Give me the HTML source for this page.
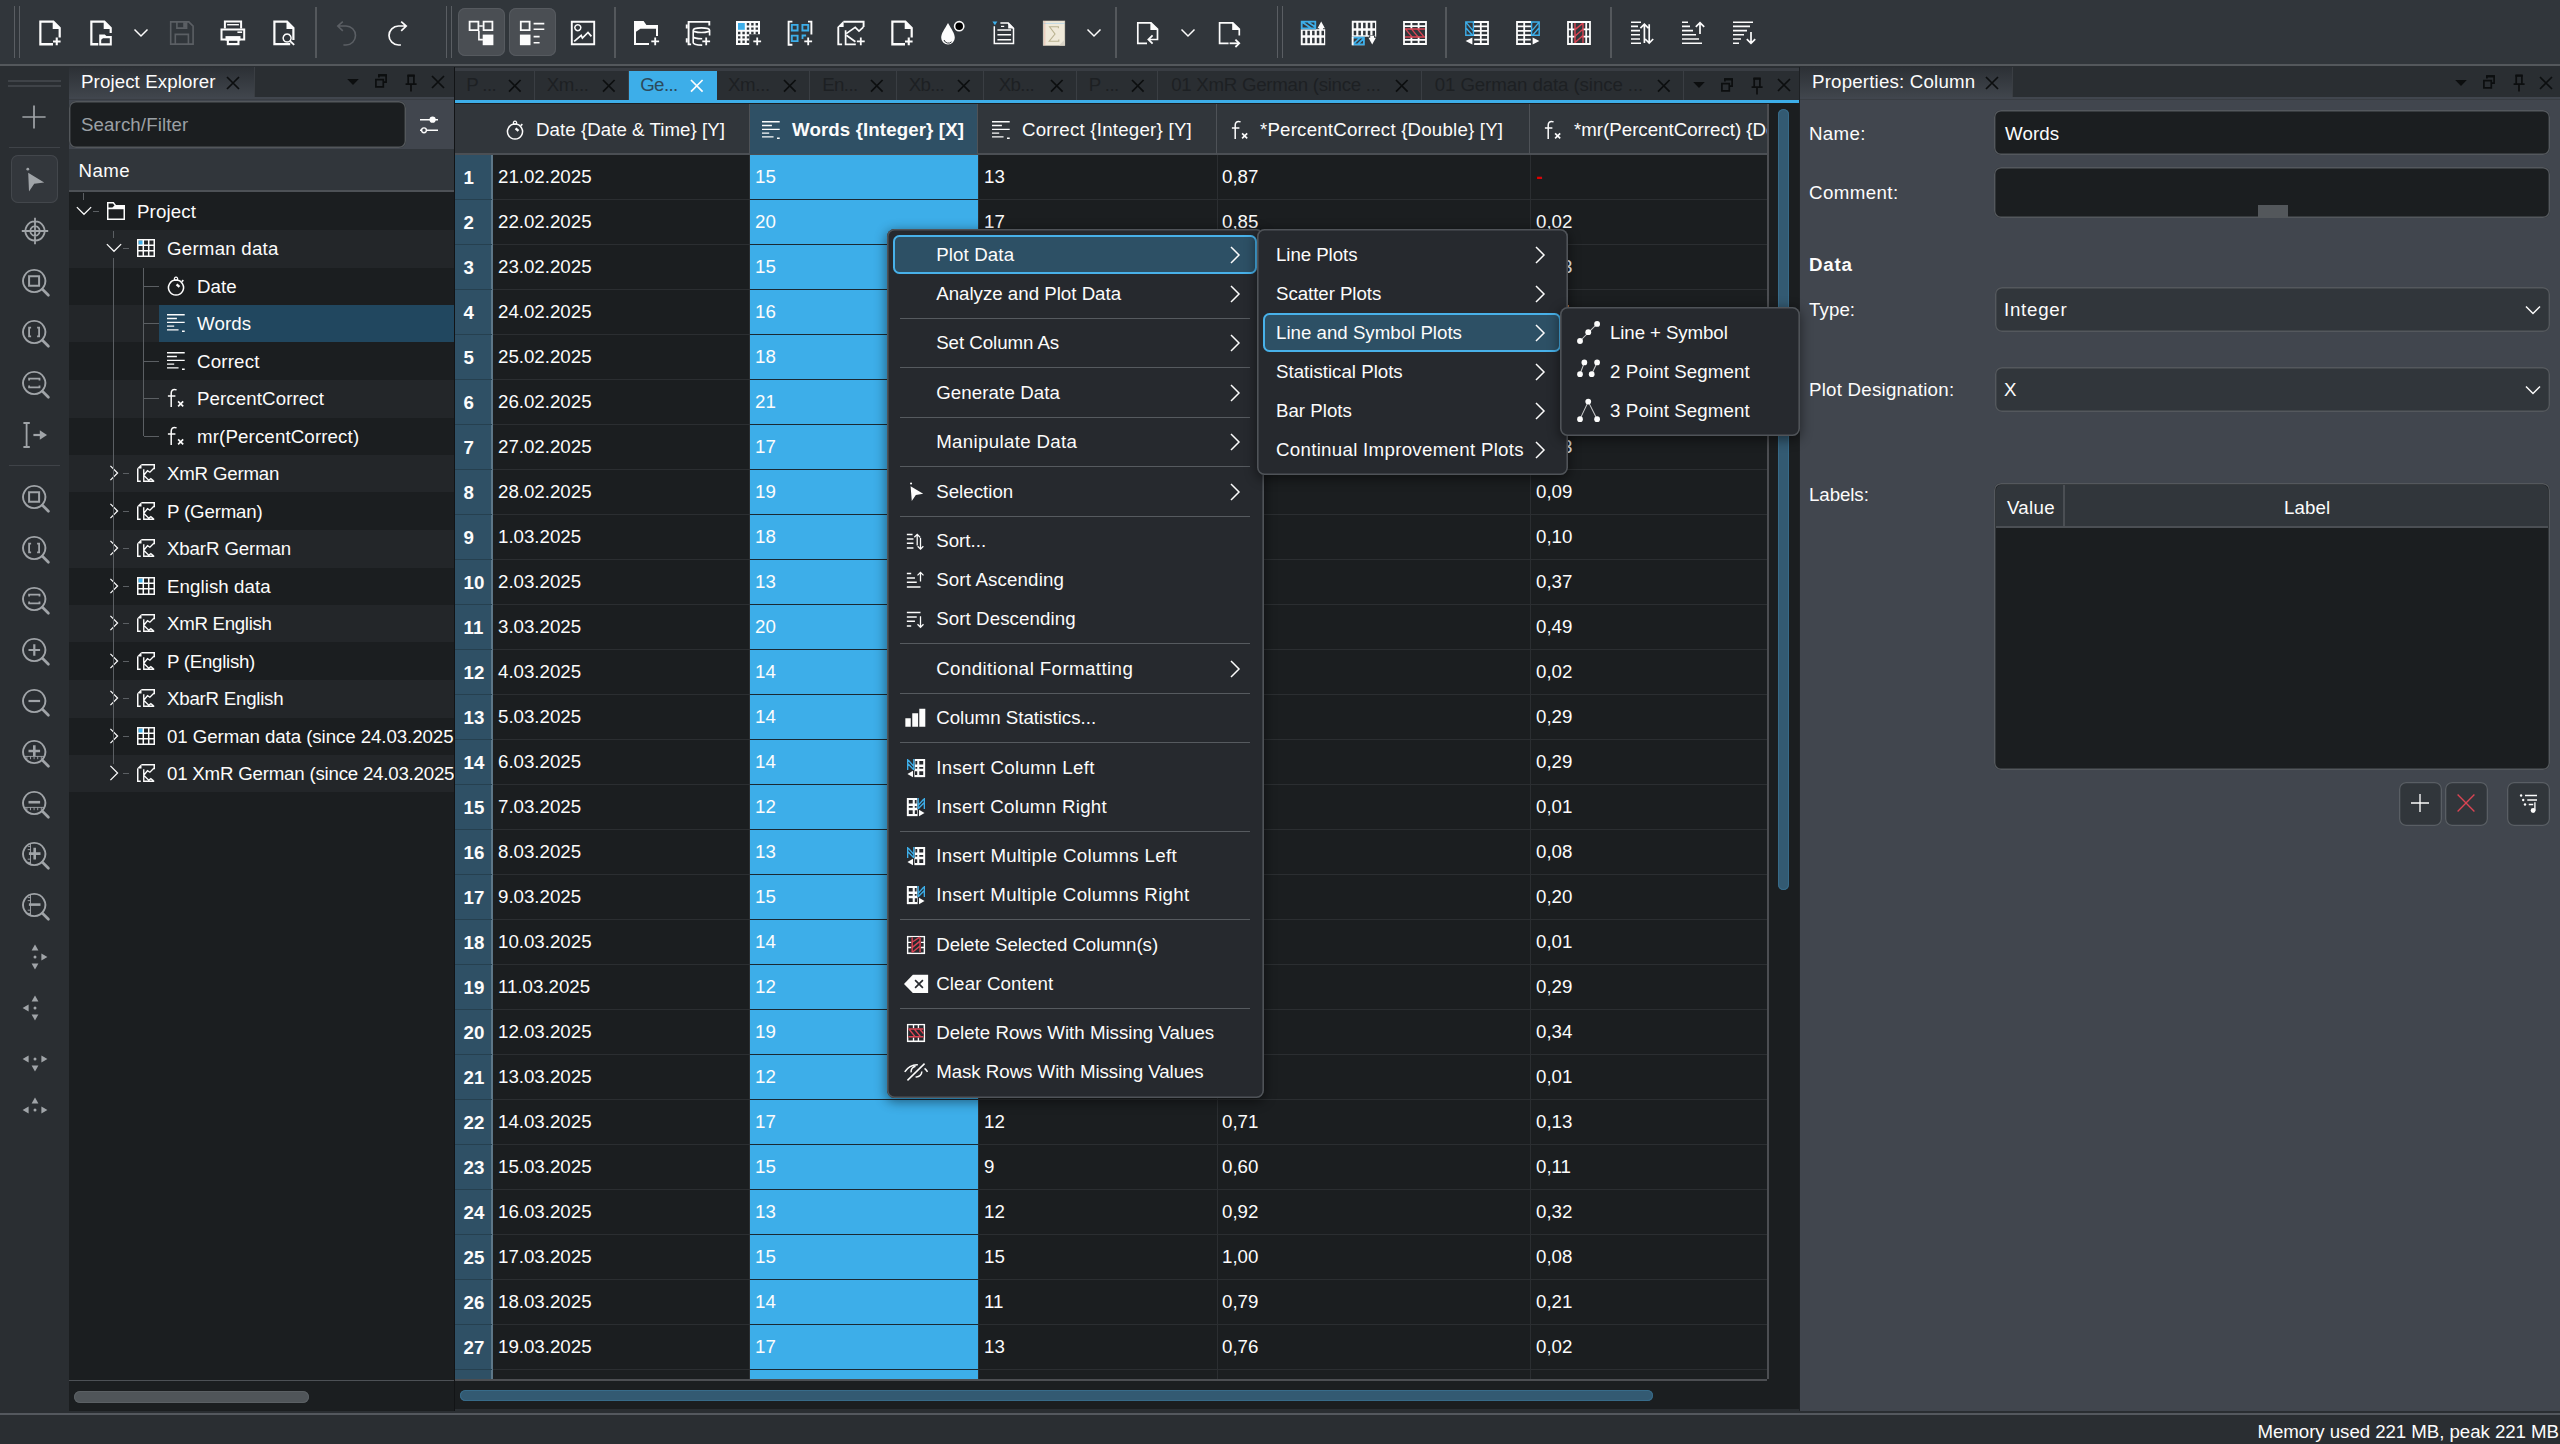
<!DOCTYPE html>
<html><head><meta charset="utf-8"><title>LabPlot</title><style>
html,body{margin:0;padding:0;background:#2a2e32;overflow:hidden}
#r{position:relative;width:2560px;height:1444px;overflow:hidden;font-family:"Liberation Sans",sans-serif;font-size:18.7px;line-height:24px;color:#fcfcfc}
.b,.i,.t{position:absolute}
.i{overflow:visible}
.t{white-space:nowrap}
</style></head><body><div id="r">
<div class="b" style="left:0px;top:0px;width:2560px;height:64px;background:#31363b;"></div>
<div class="b" style="left:0px;top:64px;width:2560px;height:2px;background:#54585c;"></div>
<div class="b" style="left:14px;top:6px;width:1px;height:52px;background:#5a5e63;"></div>
<div class="b" style="left:19px;top:6px;width:1px;height:52px;background:#5a5e63;"></div>
<svg class="i" style="left:32.5px;top:16.5px;color:#fcfcfc" width="32" height="32" viewBox="0 0 16 16"><path d="M3.125 1.75H10.4L13.9 5.25V10.2H12.8V5.95H9.85V2.85H4.225V13H10V14.25H3.125z" fill="currentColor" /><path d="M10 11.75h3.8v.95H10zM11.35 10.2h1.05v3.95h-1.05z" fill="currentColor" /></svg>
<svg class="i" style="left:83.5px;top:16.5px;color:#fcfcfc" width="32" height="32" viewBox="0 0 16 16"><path d="M3.125 1.75H10.4L13.9 5.25V8H12.8V5.95H9.85V2.85H4.225V13H7.15V14.25H3.125z" fill="currentColor" /><path d="M7.6 8.75H10.4L11.2 9.55H13.9V14.25H7.6zM8.6 11.4L9.5 10.6H12.9V13.1H8.6z" fill="currentColor" fill-rule="evenodd"/></svg>
<svg class="i" style="left:165.5px;top:16.5px;color:#5b5f64" width="32" height="32" viewBox="0 0 16 16"><path d="M2.35 2.45H11.4L13.55 4.6V13.55H2.35z" fill="none" stroke="currentColor" stroke-width="0.8" /><path d="M5.45 2.45V5.55H10.3V2.45M4.65 13.55V8.7H11.2V13.55" fill="none" stroke="currentColor" stroke-width="0.8" /><path d="M8.6 2.6h1.6v2.8H8.6z" fill="currentColor" /></svg>
<svg class="i" style="left:216.5px;top:16.5px;color:#fcfcfc" width="32" height="32" viewBox="0 0 16 16"><path d="M3.95 5.8V2.25H12.05V5.8" fill="none" stroke="currentColor" stroke-width="1" /><path d="M5.05 3.85H10.95" fill="none" stroke="currentColor" stroke-width="0.7" /><path d="M2.25 6.3H13.6V11.25H2.25z" fill="none" stroke="currentColor" stroke-width="1" /><path d="M4.25 9.55H11.75V11.75H4.25z" fill="currentColor" /><path d="M10.2 7.2h2.35v.8H10.2z" fill="currentColor" /><path d="M4.9 11.5H11.25V14.1H4.9z" fill="currentColor" /><path d="M5.95 11.9H10.2V13H5.95z" fill="#31363b" /></svg>
<svg class="i" style="left:267.5px;top:16.5px;color:#fcfcfc" width="32" height="32" viewBox="0 0 16 16"><path d="M2.65 1.75H9.75L13.25 5.25V11.45H12.15V5.95H9.25V2.85H3.75V13H11.1V14.1H2.65z" fill="currentColor" /><circle cx="9.55" cy="10.5" r="2.3" fill="#31363b"/><path d="M9.55 8.5a2 2 0 1 0 .01 0z" fill="none" stroke="currentColor" stroke-width="0.75" /><path d="M11 12l2.1 1.9" fill="none" stroke="currentColor" stroke-width="0.9" /></svg>
<svg class="i" style="left:330px;top:16.5px;color:#5b5f64" width="32" height="32" viewBox="0 0 16 16"><path d="M6.4 2.3L3.9 4.5l2.5 2.4M4 4.5h4a4.75 4.75 0 0 1 0 9.5H6.7" fill="none" stroke="currentColor" stroke-width="0.8" /></svg>
<svg class="i" style="left:381px;top:16.5px;color:#fcfcfc" width="32" height="32" viewBox="0 0 16 16"><path d="M10.1 2.3l2.5 2.2-2.5 2.4M12.5 4.5H8.75a4.75 4.75 0 0 0 0 9.5h1.2" fill="none" stroke="currentColor" stroke-width="0.85" /></svg>
<svg class="i" style="left:132px;top:24px" width="18" height="18" viewBox="0 0 18 18"><path d="M2.5 5.5L9 12l6.5-6.5" fill="none" stroke="#fcfcfc" stroke-width="1.5"/></svg>
<div class="b" style="left:314.5px;top:7px;width:2px;height:51px;background:#54585c;"></div>
<div class="b" style="left:446px;top:6px;width:1px;height:52px;background:#5a5e63;"></div>
<div class="b" style="left:451px;top:6px;width:1px;height:52px;background:#5a5e63;"></div>
<div class="b" style="left:457.5px;top:8px;width:47.5px;height:47.5px;background:#4a4e53;border-radius:7px;box-shadow:inset 0 0 0 1px #565a5f"></div>
<div class="b" style="left:508.5px;top:8px;width:47.5px;height:47.5px;background:#4a4e53;border-radius:7px;box-shadow:inset 0 0 0 1px #565a5f"></div>
<svg class="i" style="left:465.4px;top:16.5px;color:#fcfcfc" width="32" height="32" viewBox="0 0 16 16"><path d="M2.3 2.3h4.4v4.3H2.3zM9.3 2.3h4.4v4.3H9.3z" fill="none" stroke="currentColor" stroke-width="0.9" /><path d="M7.1 4.5h1.8M6.95 7v4.3h2" fill="none" stroke="currentColor" stroke-width="0.8" /><path d="M8.85 8.8h5.35v5.3H8.85z" fill="currentColor" /></svg>
<svg class="i" style="left:516.4px;top:16.5px;color:#fcfcfc" width="32" height="32" viewBox="0 0 16 16"><path d="M2.4 2.3h4.4v4.3H2.4z" fill="none" stroke="currentColor" stroke-width="0.9" /><path d="M1.95 8.8h5.3v5.3H1.95z" fill="currentColor" /><path d="M8.8 3.3h5.35M8.8 6.1h5.35M8.8 9.8h3M8.8 12.85h3" fill="none" stroke="currentColor" stroke-width="0.8" /></svg>
<svg class="i" style="left:567.4px;top:16.5px;color:#fcfcfc" width="32" height="32" viewBox="0 0 16 16"><path d="M2.4 2.35h11.2v11.3H2.4z" fill="none" stroke="currentColor" stroke-width="0.95" /><path d="M5.4 3.85a1.5 1.5 0 1 0 .01 0z" fill="none" stroke="currentColor" stroke-width="0.75" /><path d="M3.6 12.2L7.1 9.2 7.7 10.5 10.5 7.7 12.2 9.7" fill="none" stroke="currentColor" stroke-width="0.85" /></svg>
<div class="b" style="left:614px;top:7px;width:2px;height:51px;background:#54585c;"></div>
<svg class="i" style="left:629.5px;top:16.5px;color:#fcfcfc" width="32" height="32" viewBox="0 0 16 16"><path d="M2 2v12h7.5v-1H3V7.4l2.2-1.5H13v3.6h1V4H8.2L6.8 2z" fill="currentColor" /><path d="M10.65 11.7h3.9v.9h-3.9zM12.15 10.2h.9v3.9h-.9z" fill="currentColor" /></svg>
<svg class="i" style="left:680.5px;top:16.5px;color:#fcfcfc" width="32" height="32" viewBox="0 0 16 16"><g transform="translate(.75 0)"><path d="M13.4 4.25V2.45H3.05V13.7H4.3" fill="none" stroke="currentColor" stroke-width="0.95" /><path d="M1.65 3.8h.95v2h-.95zM1.65 10.65h.95v2.05h-.95z" fill="currentColor" /><path d="M5.35 6.6a4.1 1.15 0 0 0 8.2 0a4.1 1.15 0 0 0-8.2 0V12.9c0 .6 1.8 1.15 4.5 1.15M5.35 9.7c0 .6 1.8 1.15 4.5 1.15M13.55 6.6V9.3" fill="none" stroke="currentColor" stroke-width="0.8" /></g><path d="M10.65 11.7h3.9v.9h-3.9zM12.15 10.2h.9v3.9h-.9z" fill="currentColor" /></svg>
<svg class="i" style="left:731.5px;top:16.5px;color:#fcfcfc" width="32" height="32" viewBox="0 0 16 16"><path d="M2 2h12v6.6H8.6v5.4H2z" fill="currentColor" /><path d="M7.40 3.00h1.2v1.2h-1.2zM9.60 3.00h1.2v1.2h-1.2zM11.80 3.00h1.2v1.2h-1.2zM7.40 5.20h1.2v1.2h-1.2zM9.60 5.20h1.2v1.2h-1.2zM11.80 5.20h1.2v1.2h-1.2zM3.00 7.40h1.2v1.2h-1.2zM5.20 7.40h1.2v1.2h-1.2zM7.40 7.40h1.2v1.2h-1.2zM9.60 7.40h1.2v1.2h-1.2zM11.80 7.40h1.2v1.2h-1.2zM3.00 9.60h1.2v1.2h-1.2zM5.20 9.60h1.2v1.2h-1.2zM7.40 9.60h1.2v1.2h-1.2zM3.00 11.80h1.2v1.2h-1.2zM5.20 11.80h1.2v1.2h-1.2zM7.40 11.80h1.2v1.2h-1.2z" fill="#31363b" /><path d="M3 3h3.4v3.4H3z" fill="#3daee9" /><path d="M10.65 11.7h3.9v.9h-3.9zM12.15 10.2h.9v3.9h-.9z" fill="currentColor" /></svg>
<svg class="i" style="left:782.5px;top:16.5px;color:#fcfcfc" width="32" height="32" viewBox="0 0 16 16"><path d="M4.7 2.3H2.8V13.85H4.7M12.5 2.3H14.2V8.8" fill="none" stroke="currentColor" stroke-width="0.95" /><path d="M4.4 3.95h2.9v2.8H4.4zM9.7 3.95h2.9v2.8H9.7zM4.4 9.3h2.9v2.75H4.4z" fill="none" stroke="#3daee9" stroke-width="0.95" /><path d="M9.75 11V9.25h1.8" fill="none" stroke="#3daee9" stroke-width="0.9" /><path d="M10.65 11.7h3.9v.9h-3.9zM12.15 10.2h.9v3.9h-.9z" fill="currentColor" /></svg>
<svg class="i" style="left:833.5px;top:16.5px;color:#fcfcfc" width="32" height="32" viewBox="0 0 16 16"><path d="M1.7 5.05L4.8 1.9V5.05z" fill="currentColor" /><path d="M4.8 2.4H14.8V5.05M2.15 5.05V13.7H4.05" fill="none" stroke="currentColor" stroke-width="0.95" /><path d="M5.8 6.6V13.7H10.9" fill="none" stroke="currentColor" stroke-width="0.85" /><path d="M6.1 8.3L10.6 5.2 12.5 7.05 14.7 5.05M6.2 9.1L10.7 12.4" fill="none" stroke="currentColor" stroke-width="0.85" /><g transform="translate(.8 0)"><path d="M10.65 11.7h3.9v.9h-3.9zM12.15 10.2h.9v3.9h-.9z" fill="currentColor" /></g></svg>
<svg class="i" style="left:884.5px;top:16.5px;color:#fcfcfc" width="32" height="32" viewBox="0 0 16 16"><path d="M3.125 1.75H10.4L13.9 5.25V10.2H12.8V5.95H9.85V2.85H4.225V13H10V14.25H3.125z" fill="currentColor" /><path d="M10 11.75h3.8v.95H10zM11.35 10.2h1.05v3.95h-1.05z" fill="currentColor" /></svg>
<svg class="i" style="left:935.5px;top:16.5px;color:#fcfcfc" width="32" height="32" viewBox="0 0 16 16"><path d="M6 3C4.2 6.2 2.6 8.2 2.6 10.4a3.4 3.4 0 0 0 6.8 0C9.4 8.2 7.8 6.2 6 3z" fill="currentColor" /><path d="M4 11.5a2.3 2.3 0 0 0 3.8.9" fill="none" stroke="#31363b" stroke-width="0.5" /><circle cx="11.6" cy="4.6" r="2.3" fill="#000" stroke="currentColor" stroke-width="0.8"/></svg>
<svg class="i" style="left:986.5px;top:16.5px;color:#fcfcfc" width="32" height="32" viewBox="0 0 16 16"><path d="M2.7 2.25h2.5L3.95 4.1z" fill="#3daee9" /><path d="M6.7 3.05H10.6L13.25 5.7V13.25H3.65V4.6" fill="none" stroke="currentColor" stroke-width="0.75" /><path d="M10.6 2.7L13.6 5.7H10.6z" fill="currentColor" /><path d="M5.2 6.5h6.85M5.2 8.9h6.85M5.2 11.4h6.85" fill="none" stroke="currentColor" stroke-width="0.8" /><path d="M7 4.7h1.6" fill="none" stroke="currentColor" stroke-width="0.6" /></svg>
<svg class="i" style="left:1037.5px;top:16.5px;color:#fcfcfc" width="32" height="32" viewBox="0 0 16 16"><rect x="2.6" y="2" width="10.8" height="12.2" fill="#efe9d9" stroke="#d9d2c0" stroke-width="0.3"/><path d="M2.6 3.2h10.8" stroke="#8ec7ee" stroke-width="0.25"/><path d="M3.4 2v12.2" stroke="#e8a9a0" stroke-width="0.3"/><path d="M10.5 14.2l2.9-2.9v2.9z" fill="#d8d3c6"/><path d="M10.2 5.6V4.9H5.8l2.7 3.6-2.9 3.6h4.8v-.9" fill="none" stroke="#b9b290" stroke-width="0.55"/></svg>
<svg class="i" style="left:1085px;top:24px" width="18" height="18" viewBox="0 0 18 18"><path d="M2.5 5.5L9 12l6.5-6.5" fill="none" stroke="#fcfcfc" stroke-width="1.5"/></svg>
<div class="b" style="left:1115px;top:7px;width:2px;height:51px;background:#54585c;"></div>
<svg class="i" style="left:1131px;top:16.5px;color:#fcfcfc" width="32" height="32" viewBox="0 0 16 16"><path d="M8 13.15H3.4V2.9H10L13.25 6.1V11.25H9" fill="none" stroke="currentColor" stroke-width="0.85" /><path d="M9.7 2.5L13.7 6.5H9.7z" fill="currentColor" /><path d="M10.8 9.2L8.7 11.25l2.1 2.05" fill="none" stroke="currentColor" stroke-width="0.9" /></svg>
<svg class="i" style="left:1178.5px;top:24px" width="18" height="18" viewBox="0 0 18 18"><path d="M2.5 5.5L9 12l6.5-6.5" fill="none" stroke="#fcfcfc" stroke-width="1.5"/></svg>
<svg class="i" style="left:1212.5px;top:16.5px;color:#fcfcfc" width="32" height="32" viewBox="0 0 16 16"><path d="M7.8 13.15H3.3V2.9H9.9L13.15 6.1V9.3" fill="none" stroke="currentColor" stroke-width="0.85" /><path d="M9.6 2.5L13.6 6.5H9.6z" fill="currentColor" /><path d="M8.3 13.15H13" fill="none" stroke="currentColor" stroke-width="0.9" /><path d="M11.2 11.3l1.9 1.85-1.9 1.85" fill="none" stroke="currentColor" stroke-width="0.9" /></svg>
<div class="b" style="left:1277px;top:6px;width:1px;height:52px;background:#5a5e63;"></div>
<div class="b" style="left:1282px;top:6px;width:1px;height:52px;background:#5a5e63;"></div>
<svg class="i" style="left:1296.5px;top:16.5px;color:#fcfcfc" width="32" height="32" viewBox="0 0 16 16"><path d="M1.9 6.1H14.1V14.1H1.9z" fill="currentColor" /><path d="M11.1 5.4h1.9v1h-1.9z" fill="currentColor" /><path d="M2.85 6.9h1.25v2.2h-1.25zM5.20 6.9h1.25v2.2h-1.25zM7.55 6.9h1.25v2.2h-1.25zM9.90 6.9h1.25v2.2h-1.25zM12.25 6.9h1.25v2.2h-1.25zM2.85 10.35h1.25v2.8h-1.25zM5.20 10.35h1.25v2.8h-1.25zM7.55 10.35h1.25v2.8h-1.25zM9.90 10.35h1.25v2.8h-1.25zM12.25 10.35h1.25v2.8h-1.25z" fill="#31363b" /><path d="M1.9 1.9h7.65v4.2H1.9z" fill="#31363b" /><path d="M2.35 2.35h6.8v3.35h-6.8zM2.9 2.8l4.4 2.9M5.6 2.6l3.4 2.3" fill="none" stroke="#3daee9" stroke-width="0.9" /><path d="M12.1 2.2l1.85 3.45h-3.7z" fill="currentColor" /></svg>
<svg class="i" style="left:1347.5px;top:16.5px;color:#fcfcfc" width="32" height="32" viewBox="0 0 16 16"><path d="M1.9 1.9H14.1V9.9H8.3V14.1H1.9z" fill="currentColor" /><path d="M2.85 2.85h1.25v2.8h-1.25zM5.20 2.85h1.25v2.8h-1.25zM7.55 2.85h1.25v2.8h-1.25zM9.90 2.85h1.25v2.8h-1.25zM12.25 2.85h1.25v2.8h-1.25zM2.85 6.9h1.25v2.2h-1.25zM5.20 6.9h1.25v2.2h-1.25zM7.55 6.9h1.25v2.2h-1.25zM9.90 6.9h1.25v2.2h-1.25zM12.25 6.9h1.25v2.2h-1.25zM10.60 9.2h3v1h-3z" fill="#31363b" /><path d="M11.1 9.5h1.9v1.2h-1.9z" fill="currentColor" /><path d="M1.9 9.9h6.5v4.2H1.9z" fill="#31363b" /><path d="M2.35 10.3h5.6v3.35h-5.6M2.6 13.5l3.4-3.1M5 13.6l3-3" fill="none" stroke="#3daee9" stroke-width="0.9" /><path d="M2.35 9.9v4.2" fill="none" stroke="currentColor" stroke-width="0.9" /><path d="M12.1 13.8l1.85-3.45h-3.7z" fill="currentColor" /></svg>
<svg class="i" style="left:1398.5px;top:16.5px;color:#fcfcfc" width="32" height="32" viewBox="0 0 16 16"><path d="M2.5 2.5h11v11h-11zM2.5 4.6h11M2.5 11.4h11M6.2 2.5v11M9.8 2.5v11" fill="none" stroke="currentColor" stroke-width="0.9" /><path d="M3 6.2h10v3.6H3z" fill="#31363b" /><path d="M3 6h10M3 10h10M3.4 6.2l3 3.6M6.4 6.2l3 3.6M9.4 6.2l3 3.6" fill="none" stroke="#da4453" stroke-width="0.7" /></svg>
<div class="b" style="left:1445px;top:7px;width:2px;height:51px;background:#54585c;"></div>
<svg class="i" style="left:1461px;top:16.5px;color:#fcfcfc" width="32" height="32" viewBox="0 0 16 16"><path d="M6.4 2.5h7.1v11H6.4M6.4 4.7h7.1M6.4 6.9h7.1M6.4 9.1h7.1M6.4 11.3h7.1M9.9 2.5v11" fill="none" stroke="currentColor" stroke-width="0.9" /><path d="M2 9.6h4.6v4.2H2z" fill="#31363b" /><path d="M2.4 2.5h3.8v6.6H2.4zM2.6 2.8l3.4 4M2.6 5.6l3 3.4" fill="none" stroke="#3daee9" stroke-width="0.7" /><path d="M2.3 12l3.4-1.7v3.4z" fill="currentColor" /></svg>
<svg class="i" style="left:1512px;top:16.5px;color:#fcfcfc" width="32" height="32" viewBox="0 0 16 16"><path d="M9.6 2.5H2.5v11h7.1M2.5 4.7h7.1M2.5 6.9h7.1M2.5 9.1h7.1M2.5 11.3h7.1M6.1 2.5v11" fill="none" stroke="currentColor" stroke-width="0.9" /><path d="M9.4 9.6h4.6v4.2H9.4z" fill="#31363b" /><path d="M9.8 2.5h3.8v6.6H9.8zM13.4 2.8l-3.4 4M13.4 5.6l-3 3.4" fill="none" stroke="#3daee9" stroke-width="0.7" /><path d="M13.7 12l-3.4-1.7v3.4z" fill="currentColor" /></svg>
<svg class="i" style="left:1563px;top:16.5px;color:#fcfcfc" width="32" height="32" viewBox="0 0 16 16"><path d="M2.5 2.5h11v11h-11zM4.4 2.5v11M11.6 2.5v11M2.5 6.2h11M2.5 9.8h11" fill="none" stroke="currentColor" stroke-width="0.9" /><path d="M6.2 3h3.6v10H6.2z" fill="#31363b" /><path d="M6 3v10M10 3v10M6.2 6.2l3.6-3M6.2 9.4l3.6-3.2M6.2 12.6l3.6-3.2" fill="none" stroke="#da4453" stroke-width="0.7" /></svg>
<div class="b" style="left:1610px;top:7px;width:2px;height:51px;background:#54585c;"></div>
<svg class="i" style="left:1626px;top:16.5px;color:#fcfcfc" width="32" height="32" viewBox="0 0 16 16"><path d="M2.5 2.6h5M2.5 4.7h3.5M2.5 6.8h4.5M2.5 8.9h4.5M2.5 11h4.5M2.5 13.1h5" fill="none" stroke="currentColor" stroke-width="0.8" /><path d="M9.2 13V3.6M7.2 5.6l2-2 2 2M11.6 3.6V13M9.6 11l2 2 2-2" fill="none" stroke="currentColor" stroke-width="0.85" /></svg>
<svg class="i" style="left:1677px;top:16.5px;color:#fcfcfc" width="32" height="32" viewBox="0 0 16 16"><path d="M2.5 2.6h3M2.5 4.7h4M2.5 6.8h5.5M2.5 8.9h7M2.5 11h8.5M2.5 13.1h10" fill="none" stroke="currentColor" stroke-width="0.8" /><path d="M11.5 8.5V2.8M9.4 4.9l2.1-2.1 2.1 2.1" fill="none" stroke="currentColor" stroke-width="0.85" /></svg>
<svg class="i" style="left:1728px;top:16.5px;color:#fcfcfc" width="32" height="32" viewBox="0 0 16 16"><path d="M2.5 2.6h10M2.5 4.7h8.5M2.5 6.8h7M2.5 8.9h5.5M2.5 11h4M2.5 13.1h3" fill="none" stroke="currentColor" stroke-width="0.8" /><path d="M11.5 7.5v5.7M9.4 11.1l2.1 2.1 2.1-2.1" fill="none" stroke="currentColor" stroke-width="0.85" /></svg>
<div class="b" style="left:0px;top:66px;width:2560px;height:1346px;background:#2a2e32;"></div>
<div class="b" style="left:8px;top:80px;width:53px;height:1.6px;background:#3f4348;"></div>
<div class="b" style="left:8px;top:85px;width:53px;height:1.6px;background:#3f4348;"></div>
<svg class="i" style="left:18px;top:101px;color:#a0a4a8" width="32" height="32" viewBox="0 0 16 16"><path d="M8 2.2v11.6M2.2 8h11.6" fill="none" stroke="currentColor" stroke-width="0.85" /></svg>
<div class="b" style="left:9px;top:147px;width:51px;height:1px;background:#3f4348;"></div>
<div class="b" style="left:10.6px;top:154.8px;width:47.6px;height:48px;background:#33373c;border-radius:7px;box-shadow:inset 0 0 0 1px #43474c"></div>
<svg class="i" style="left:18.5px;top:164px;color:#a0a4a8" width="32" height="32" viewBox="0 0 16 16"><circle cx="4.4" cy="2.6" r="0.7" fill="currentColor"/><path d="M4.6 4.4L12.6 9.2 7.6 9.9 5 13.8z" fill="currentColor" /></svg>
<svg class="i" style="left:18.5px;top:215px;color:#a0a4a8" width="32" height="32" viewBox="0 0 16 16"><path d="M8 3.2a4.8 4.8 0 1 0 .01 0zM8 5.6a2.4 2.4 0 1 0 .01 0zM8 1.4v13.2M1.4 8h13.2" fill="none" stroke="currentColor" stroke-width="0.9" /></svg>
<svg class="i" style="left:18.5px;top:266px;color:#a0a4a8" width="32" height="32" viewBox="0 0 16 16"><path d="M7.6 1.95a5.55 5.55 0 1 0 .01 0z" fill="none" stroke="currentColor" stroke-width="0.95" /><path d="M11.7 11.6l3 3" fill="none" stroke="currentColor" stroke-width="1.35" stroke-linecap="round"/><g transform="translate(.35 .1)"><path d="M4.7 5h5v4.8h-5z" fill="none" stroke="currentColor" stroke-width="1" /></g></svg>
<svg class="i" style="left:18.5px;top:317px;color:#a0a4a8" width="32" height="32" viewBox="0 0 16 16"><path d="M7.6 1.95a5.55 5.55 0 1 0 .01 0z" fill="none" stroke="currentColor" stroke-width="0.95" /><path d="M11.7 11.6l3 3" fill="none" stroke="currentColor" stroke-width="1.35" stroke-linecap="round"/><g transform="translate(.35 .1)"><path d="M5.7 5.2h-1v4.4h1M8.7 5.2h1v4.4h-1" fill="none" stroke="currentColor" stroke-width="0.9" /></g></svg>
<svg class="i" style="left:18.5px;top:368px;color:#a0a4a8" width="32" height="32" viewBox="0 0 16 16"><path d="M7.6 1.95a5.55 5.55 0 1 0 .01 0z" fill="none" stroke="currentColor" stroke-width="0.95" /><path d="M11.7 11.6l3 3" fill="none" stroke="currentColor" stroke-width="1.35" stroke-linecap="round"/><g transform="translate(.35 .1)"><path d="M4.7 6.2v-1h5.2v1M4.7 8.6v1h5.2v-1" fill="none" stroke="currentColor" stroke-width="0.9" /></g></svg>
<svg class="i" style="left:18.5px;top:419px;color:#a0a4a8" width="32" height="32" viewBox="0 0 16 16"><path d="M2.2 2h3.2M2.2 14h3.2M3.8 2v12" fill="none" stroke="currentColor" stroke-width="0.9" /><path d="M7.2 8h4" fill="none" stroke="currentColor" stroke-width="1.1" /><path d="M10.4 5.6L14 8l-3.6 2.4z" fill="currentColor" /></svg>
<div class="b" style="left:9px;top:465px;width:51px;height:1px;background:#3f4348;"></div>
<svg class="i" style="left:18.5px;top:481.5px;color:#a0a4a8" width="32" height="32" viewBox="0 0 16 16"><path d="M7.6 1.95a5.55 5.55 0 1 0 .01 0z" fill="none" stroke="currentColor" stroke-width="0.95" /><path d="M11.7 11.6l3 3" fill="none" stroke="currentColor" stroke-width="1.35" stroke-linecap="round"/><g transform="translate(.35 .1)"><path d="M4.7 5h5v4.8h-5z" fill="none" stroke="currentColor" stroke-width="1" /></g></svg>
<svg class="i" style="left:18.5px;top:532.5px;color:#a0a4a8" width="32" height="32" viewBox="0 0 16 16"><path d="M7.6 1.95a5.55 5.55 0 1 0 .01 0z" fill="none" stroke="currentColor" stroke-width="0.95" /><path d="M11.7 11.6l3 3" fill="none" stroke="currentColor" stroke-width="1.35" stroke-linecap="round"/><g transform="translate(.35 .1)"><path d="M5.7 5.2h-1v4.4h1M8.7 5.2h1v4.4h-1" fill="none" stroke="currentColor" stroke-width="0.9" /></g></svg>
<svg class="i" style="left:18.5px;top:583.5px;color:#a0a4a8" width="32" height="32" viewBox="0 0 16 16"><path d="M7.6 1.95a5.55 5.55 0 1 0 .01 0z" fill="none" stroke="currentColor" stroke-width="0.95" /><path d="M11.7 11.6l3 3" fill="none" stroke="currentColor" stroke-width="1.35" stroke-linecap="round"/><g transform="translate(.35 .1)"><path d="M4.7 6.2v-1h5.2v1M4.7 8.6v1h5.2v-1" fill="none" stroke="currentColor" stroke-width="0.9" /></g></svg>
<svg class="i" style="left:18.5px;top:634.5px;color:#a0a4a8" width="32" height="32" viewBox="0 0 16 16"><path d="M7.6 1.95a5.55 5.55 0 1 0 .01 0z" fill="none" stroke="currentColor" stroke-width="0.95" /><path d="M11.7 11.6l3 3" fill="none" stroke="currentColor" stroke-width="1.35" stroke-linecap="round"/><g transform="translate(.35 .1)"><path d="M4.4 7.4h5.8M7.3 4.5v5.8" fill="none" stroke="currentColor" stroke-width="1.1" /></g></svg>
<svg class="i" style="left:18.5px;top:685.5px;color:#a0a4a8" width="32" height="32" viewBox="0 0 16 16"><path d="M7.6 1.95a5.55 5.55 0 1 0 .01 0z" fill="none" stroke="currentColor" stroke-width="0.95" /><path d="M11.7 11.6l3 3" fill="none" stroke="currentColor" stroke-width="1.35" stroke-linecap="round"/><g transform="translate(.35 .1)"><path d="M4.4 7.4h5.8" fill="none" stroke="currentColor" stroke-width="1.1" /></g></svg>
<svg class="i" style="left:18.5px;top:736.5px;color:#a0a4a8" width="32" height="32" viewBox="0 0 16 16"><path d="M7.6 1.95a5.55 5.55 0 1 0 .01 0z" fill="none" stroke="currentColor" stroke-width="0.95" /><path d="M11.7 11.6l3 3" fill="none" stroke="currentColor" stroke-width="1.35" stroke-linecap="round"/><g transform="translate(.35 .1)"><path d="M4.4 6.9h5.8M7.3 4v5.4" fill="none" stroke="currentColor" stroke-width="1.3" /><path d="M2.4 9.6h9.8M3.6 9.6v1.4M5.4 9.6v1.4M7.2 9.6v1.4M9 9.6v1.4M10.8 9.6v1.4" fill="none" stroke="currentColor" stroke-width="0.45" /></g></svg>
<svg class="i" style="left:18.5px;top:787.5px;color:#a0a4a8" width="32" height="32" viewBox="0 0 16 16"><path d="M7.6 1.95a5.55 5.55 0 1 0 .01 0z" fill="none" stroke="currentColor" stroke-width="0.95" /><path d="M11.7 11.6l3 3" fill="none" stroke="currentColor" stroke-width="1.35" stroke-linecap="round"/><g transform="translate(.35 .1)"><path d="M4.4 7h5.8" fill="none" stroke="currentColor" stroke-width="1.3" /><path d="M2.4 9.6h9.8M3.6 9.6v1.4M5.4 9.6v1.4M7.2 9.6v1.4M9 9.6v1.4M10.8 9.6v1.4" fill="none" stroke="currentColor" stroke-width="0.45" /></g></svg>
<svg class="i" style="left:18.5px;top:838.5px;color:#a0a4a8" width="32" height="32" viewBox="0 0 16 16"><path d="M7.6 1.95a5.55 5.55 0 1 0 .01 0z" fill="none" stroke="currentColor" stroke-width="0.95" /><path d="M11.7 11.6l3 3" fill="none" stroke="currentColor" stroke-width="1.35" stroke-linecap="round"/><g transform="translate(.35 .1)"><path d="M4.6 7.2h5.8M7.5 4.3v5.8" fill="none" stroke="currentColor" stroke-width="1.3" /><path d="M5.4 2.2v10.6M5.4 3.6H4M5.4 5.2H4M5.4 10H4M5.4 11.6H4" fill="none" stroke="currentColor" stroke-width="0.45" /></g></svg>
<svg class="i" style="left:18.5px;top:889.5px;color:#a0a4a8" width="32" height="32" viewBox="0 0 16 16"><path d="M7.6 1.95a5.55 5.55 0 1 0 .01 0z" fill="none" stroke="currentColor" stroke-width="0.95" /><path d="M11.7 11.6l3 3" fill="none" stroke="currentColor" stroke-width="1.35" stroke-linecap="round"/><g transform="translate(.35 .1)"><path d="M4.6 7.2h5.8" fill="none" stroke="currentColor" stroke-width="1.3" /><path d="M5.4 2.2v10.6M5.4 3.6H4M5.4 5.2H4M5.4 10H4M5.4 11.6H4" fill="none" stroke="currentColor" stroke-width="0.45" /></g></svg>
<svg class="i" style="left:18.5px;top:940.5px;color:#a0a4a8" width="32" height="32" viewBox="0 0 16 16"><circle cx="8" cy="8" r="0.75" fill="currentColor"/><path d="M8 1.8l1.7 3h-3.4z" fill="currentColor" /><path d="M8 14.2l1.7-3h-3.4z" fill="currentColor" /><path d="M14.2 8l-3-1.7v3.4z" fill="currentColor" /></svg>
<svg class="i" style="left:18.5px;top:991.5px;color:#a0a4a8" width="32" height="32" viewBox="0 0 16 16"><circle cx="8" cy="8" r="0.75" fill="currentColor"/><path d="M8 1.8l1.7 3h-3.4z" fill="currentColor" /><path d="M8 14.2l1.7-3h-3.4z" fill="currentColor" /><path d="M1.8 8l3-1.7v3.4z" fill="currentColor" /></svg>
<svg class="i" style="left:18.5px;top:1042.5px;color:#a0a4a8" width="32" height="32" viewBox="0 0 16 16"><circle cx="8" cy="8" r="0.75" fill="currentColor"/><path d="M1.8 8l3-1.7v3.4z" fill="currentColor" /><path d="M14.2 8l-3-1.7v3.4z" fill="currentColor" /><path d="M8 14.2l1.7-3h-3.4z" fill="currentColor" /></svg>
<svg class="i" style="left:18.5px;top:1093.5px;color:#a0a4a8" width="32" height="32" viewBox="0 0 16 16"><circle cx="8" cy="8" r="0.75" fill="currentColor"/><path d="M8 1.8l1.7 3h-3.4z" fill="currentColor" /><path d="M1.8 8l3-1.7v3.4z" fill="currentColor" /><path d="M14.2 8l-3-1.7v3.4z" fill="currentColor" /></svg>
<div class="b" style="left:69px;top:67px;width:385px;height:1345px;background:#41464e;"></div>
<div class="b" style="left:69px;top:99px;width:385px;height:1px;background:#393d43;"></div>
<div class="b" style="left:69px;top:67px;width:385px;height:30px;background:#2a2e32;"></div>
<div class="b" style="left:69px;top:67px;width:185px;height:30px;background:;background:linear-gradient(#2c3035,#40454c);border-right:1px solid #3a3e43"></div>
<div class="t" style="top:69.52px;color:#fcfcfc;left:81px;letter-spacing:0.100px;">Project Explorer</div>
<svg class="i" style="left:225px;top:75px" width="16" height="16"><path d="M2 2L14 14M14 2L2 14" stroke="#0c0e0f" stroke-width="1.7" fill="none"/></svg>
<svg class="i" style="left:430px;top:73.9px" width="16" height="16"><path d="M2 2L14 14M14 2L2 14" stroke="#0c0e0f" stroke-width="1.7" fill="none"/></svg><svg class="i" style="left:402.5px;top:72.80000000000001px" width="16" height="20"><path d="M4.4 2.6H11.7" stroke="#0c0e0f" stroke-width="2.4" fill="none"/><path d="M5.2 2v9M10.9 2v9M2.6 11.2H13.6M8 11.2V18.4" stroke="#0c0e0f" stroke-width="1.7" fill="none"/></svg><svg class="i" style="left:373px;top:73.25px" width="16" height="16"><path d="M5.9 4.6V2.3H13.1V9.1H11" stroke="#0c0e0f" stroke-width="1.7" fill="none"/><path d="M5.1 2.2H13.9" stroke="#0c0e0f" stroke-width="2.2"/><path d="M2.9 6.6H10.3V13.8H2.9z" stroke="#0c0e0f" stroke-width="1.7" fill="none"/></svg><svg class="i" style="left:346px;top:77.9px" width="14" height="8"><path d="M1.2 1H12.8L7 7z" fill="#0c0e0f"/></svg>
<div class="b" style="left:69px;top:101px;width:337.4px;height:46.6px;background:#1b1e20;border-radius:7px;box-shadow:inset 0 0 0 1.4px #53575b"></div>
<div class="t" style="top:112.52px;color:#9ba0a5;left:81px;letter-spacing:0.109px;">Search/Filter</div>
<svg class="i" style="left:417px;top:113px" width="24" height="24"><path d="M3 6.7H21M3 17.3H21" stroke="#fcfcfc" stroke-width="1.5"/><circle cx="15.6" cy="6.7" r="3.1" fill="#fcfcfc"/><circle cx="7" cy="17.3" r="2.4" fill="#41464e" stroke="#fcfcfc" stroke-width="1.4"/></svg>
<div class="b" style="left:69px;top:149px;width:385px;height:41px;background:#31363b;"></div>
<div class="b" style="left:69px;top:190px;width:385px;height:2px;background:#4d5156;"></div>
<div class="t" style="top:159.22px;color:#fcfcfc;left:78.5px;letter-spacing:0.440px;">Name</div>
<div class="b" style="left:69px;top:192px;width:385px;height:1189px;background:#1b1e20;"></div>
<div class="b" style="left:0;top:0;width:454px;height:1381px;overflow:hidden"><svg class="i" style="left:72.5px;top:200px;color:#fcfcfc" width="22" height="22" viewBox="0 0 16 16"><path d="M2.8 5.2l5.2 5.2 5.2-5.2" fill="none" stroke="currentColor" stroke-width="0.9" /></svg><div class="b" style="left:92.5px;top:211px;width:6px;height:1px;background:#5b5f63;"></div><svg class="i" style="left:104px;top:199px;color:#fcfcfc" width="24" height="24" viewBox="0 0 16 16"><path d="M2 2v12h12V4H8L6.5 2zM3 3h3l1 1.3L5.6 5.6H3zM3 6.8h10V13H3z" fill="currentColor" fill-rule="evenodd"/></svg><div class="t" style="top:199.82px;color:#fcfcfc;left:137px;letter-spacing:0.143px;">Project</div><div class="b" style="left:69px;top:230px;width:385px;height:38px;background:#232629;"></div><svg class="i" style="left:102.5px;top:237px;color:#fcfcfc" width="22" height="22" viewBox="0 0 16 16"><path d="M2.8 5.2l5.2 5.2 5.2-5.2" fill="none" stroke="currentColor" stroke-width="0.9" /></svg><div class="b" style="left:122.5px;top:248px;width:6px;height:1px;background:#5b5f63;"></div><svg class="i" style="left:134px;top:236px;color:#fcfcfc" width="24" height="24" viewBox="0 0 16 16"><path d="M3 3h3.4v3.4H3z" fill="#3daee9" /><path d="M2.5 2.5h11v11h-11zM6.2 2.5v11M9.8 2.5v11M2.5 6.2h11M2.5 9.8h11" fill="none" stroke="currentColor" stroke-width="1" /></svg><div class="t" style="top:236.82px;color:#fcfcfc;left:167px;letter-spacing:0.231px;">German data</div><div class="b" style="left:143.5px;top:286px;width:15px;height:1px;background:#5b5f63;"></div><svg class="i" style="left:164px;top:274px;color:#fcfcfc" width="24" height="24" viewBox="0 0 16 16"><path d="M8 4a5 5 0 1 0 .01 0z" fill="none" stroke="currentColor" stroke-width="1" /><path d="M8 2.1a1.1 1.1 0 1 0 .01 0z" fill="none" stroke="currentColor" stroke-width="0.8" /><path d="M11.9 5.1l1-1" fill="none" stroke="currentColor" stroke-width="1" /><path d="M8.4 6.9L10.3 8.6" fill="none" stroke="currentColor" stroke-width="1.6" /></svg><div class="t" style="top:274.82px;color:#fcfcfc;left:197px;letter-spacing:0.062px;">Date</div><div class="b" style="left:69px;top:305px;width:385px;height:37px;background:#232629;"></div><div class="b" style="left:159px;top:305px;width:295px;height:37px;background:#21475f;"></div><div class="b" style="left:143.5px;top:323px;width:15px;height:1px;background:#5b5f63;"></div><svg class="i" style="left:164px;top:311px;color:#fcfcfc" width="24" height="24" viewBox="0 0 16 16"><path d="M2 2.5h11.8M2 5h6.6M2 7.6h11.8M2 10.1h4.8M2 12.6h7.7" fill="none" stroke="currentColor" stroke-width="0.9" /><path d="M12 13h1.8v1H12z" fill="currentColor" /></svg><div class="t" style="top:311.82px;color:#fcfcfc;left:197px;letter-spacing:0.099px;">Words</div><div class="b" style="left:143.5px;top:361px;width:15px;height:1px;background:#5b5f63;"></div><svg class="i" style="left:164px;top:349px;color:#fcfcfc" width="24" height="24" viewBox="0 0 16 16"><path d="M2 2.5h11.8M2 5h6.6M2 7.6h11.8M2 10.1h4.8M2 12.6h7.7" fill="none" stroke="currentColor" stroke-width="0.9" /><path d="M12 13h1.8v1H12z" fill="currentColor" /></svg><div class="t" style="top:349.82px;color:#fcfcfc;left:197px;letter-spacing:0.190px;">Correct</div><div class="b" style="left:69px;top:380px;width:385px;height:38px;background:#232629;"></div><div class="b" style="left:143.5px;top:398px;width:15px;height:1px;background:#5b5f63;"></div><svg class="i" style="left:164px;top:386px;color:#fcfcfc" width="24" height="24" viewBox="0 0 16 16"><path d="M8.4 2.6c-2.6-.9-3.6.4-3.6 2.2V14M2.6 6.6h5" fill="none" stroke="currentColor" stroke-width="1" /><path d="M9.4 10.2l3.4 3.4M12.8 10.2l-3.4 3.4" fill="none" stroke="currentColor" stroke-width="1.1" /></svg><div class="t" style="top:386.82px;color:#fcfcfc;left:197px;letter-spacing:0.098px;">PercentCorrect</div><div class="b" style="left:143.5px;top:436px;width:15px;height:1px;background:#5b5f63;"></div><svg class="i" style="left:164px;top:424px;color:#fcfcfc" width="24" height="24" viewBox="0 0 16 16"><path d="M8.4 2.6c-2.6-.9-3.6.4-3.6 2.2V14M2.6 6.6h5" fill="none" stroke="currentColor" stroke-width="1" /><path d="M9.4 10.2l3.4 3.4M12.8 10.2l-3.4 3.4" fill="none" stroke="currentColor" stroke-width="1.1" /></svg><div class="t" style="top:424.82px;color:#fcfcfc;left:197px;letter-spacing:0.131px;">mr(PercentCorrect)</div><div class="b" style="left:69px;top:455px;width:385px;height:37px;background:#232629;"></div><svg class="i" style="left:102.5px;top:462px;color:#fcfcfc" width="22" height="22" viewBox="0 0 16 16"><path d="M5.4 2.8l5.2 5.2-5.2 5.2" fill="none" stroke="currentColor" stroke-width="0.9" /></svg><div class="b" style="left:122.5px;top:473px;width:6px;height:1px;background:#5b5f63;"></div><svg class="i" style="left:134px;top:461px;color:#fcfcfc" width="24" height="24" viewBox="0 0 16 16"><path d="M2 5l3-3v3z" fill="currentColor" /><path d="M5 2.5h8.5v3M2.5 5v8.5h2" fill="none" stroke="currentColor" stroke-width="1" /><path d="M6.5 5.5v8h7M6.5 9.5l2.5-3 1.6 1 2.6-2.6M6.8 9.8l3 3 1.4-1 1.8 1.4" fill="none" stroke="currentColor" stroke-width="0.9" /></svg><div class="t" style="top:461.82px;color:#fcfcfc;left:167px;letter-spacing:-0.204px;">XmR German</div><svg class="i" style="left:102.5px;top:500px;color:#fcfcfc" width="22" height="22" viewBox="0 0 16 16"><path d="M5.4 2.8l5.2 5.2-5.2 5.2" fill="none" stroke="currentColor" stroke-width="0.9" /></svg><div class="b" style="left:122.5px;top:511px;width:6px;height:1px;background:#5b5f63;"></div><svg class="i" style="left:134px;top:499px;color:#fcfcfc" width="24" height="24" viewBox="0 0 16 16"><path d="M2 5l3-3v3z" fill="currentColor" /><path d="M5 2.5h8.5v3M2.5 5v8.5h2" fill="none" stroke="currentColor" stroke-width="1" /><path d="M6.5 5.5v8h7M6.5 9.5l2.5-3 1.6 1 2.6-2.6M6.8 9.8l3 3 1.4-1 1.8 1.4" fill="none" stroke="currentColor" stroke-width="0.9" /></svg><div class="t" style="top:499.82px;color:#fcfcfc;left:167px;letter-spacing:-0.166px;">P (German)</div><div class="b" style="left:69px;top:530px;width:385px;height:38px;background:#232629;"></div><svg class="i" style="left:102.5px;top:537px;color:#fcfcfc" width="22" height="22" viewBox="0 0 16 16"><path d="M5.4 2.8l5.2 5.2-5.2 5.2" fill="none" stroke="currentColor" stroke-width="0.9" /></svg><div class="b" style="left:122.5px;top:548px;width:6px;height:1px;background:#5b5f63;"></div><svg class="i" style="left:134px;top:536px;color:#fcfcfc" width="24" height="24" viewBox="0 0 16 16"><path d="M2 5l3-3v3z" fill="currentColor" /><path d="M5 2.5h8.5v3M2.5 5v8.5h2" fill="none" stroke="currentColor" stroke-width="1" /><path d="M6.5 5.5v8h7M6.5 9.5l2.5-3 1.6 1 2.6-2.6M6.8 9.8l3 3 1.4-1 1.8 1.4" fill="none" stroke="currentColor" stroke-width="0.9" /></svg><div class="t" style="top:536.82px;color:#fcfcfc;left:167px;letter-spacing:-0.128px;">XbarR German</div><svg class="i" style="left:102.5px;top:575px;color:#fcfcfc" width="22" height="22" viewBox="0 0 16 16"><path d="M5.4 2.8l5.2 5.2-5.2 5.2" fill="none" stroke="currentColor" stroke-width="0.9" /></svg><div class="b" style="left:122.5px;top:586px;width:6px;height:1px;background:#5b5f63;"></div><svg class="i" style="left:134px;top:574px;color:#fcfcfc" width="24" height="24" viewBox="0 0 16 16"><path d="M3 3h3.4v3.4H3z" fill="#3daee9" /><path d="M2.5 2.5h11v11h-11zM6.2 2.5v11M9.8 2.5v11M2.5 6.2h11M2.5 9.8h11" fill="none" stroke="currentColor" stroke-width="1" /></svg><div class="t" style="top:574.82px;color:#fcfcfc;left:167px;letter-spacing:0.073px;">English data</div><div class="b" style="left:69px;top:605px;width:385px;height:37px;background:#232629;"></div><svg class="i" style="left:102.5px;top:612px;color:#fcfcfc" width="22" height="22" viewBox="0 0 16 16"><path d="M5.4 2.8l5.2 5.2-5.2 5.2" fill="none" stroke="currentColor" stroke-width="0.9" /></svg><div class="b" style="left:122.5px;top:623px;width:6px;height:1px;background:#5b5f63;"></div><svg class="i" style="left:134px;top:611px;color:#fcfcfc" width="24" height="24" viewBox="0 0 16 16"><path d="M2 5l3-3v3z" fill="currentColor" /><path d="M5 2.5h8.5v3M2.5 5v8.5h2" fill="none" stroke="currentColor" stroke-width="1" /><path d="M6.5 5.5v8h7M6.5 9.5l2.5-3 1.6 1 2.6-2.6M6.8 9.8l3 3 1.4-1 1.8 1.4" fill="none" stroke="currentColor" stroke-width="0.9" /></svg><div class="t" style="top:611.82px;color:#fcfcfc;left:167px;letter-spacing:-0.306px;">XmR English</div><svg class="i" style="left:102.5px;top:650px;color:#fcfcfc" width="22" height="22" viewBox="0 0 16 16"><path d="M5.4 2.8l5.2 5.2-5.2 5.2" fill="none" stroke="currentColor" stroke-width="0.9" /></svg><div class="b" style="left:122.5px;top:661px;width:6px;height:1px;background:#5b5f63;"></div><svg class="i" style="left:134px;top:649px;color:#fcfcfc" width="24" height="24" viewBox="0 0 16 16"><path d="M2 5l3-3v3z" fill="currentColor" /><path d="M5 2.5h8.5v3M2.5 5v8.5h2" fill="none" stroke="currentColor" stroke-width="1" /><path d="M6.5 5.5v8h7M6.5 9.5l2.5-3 1.6 1 2.6-2.6M6.8 9.8l3 3 1.4-1 1.8 1.4" fill="none" stroke="currentColor" stroke-width="0.9" /></svg><div class="t" style="top:649.82px;color:#fcfcfc;left:167px;letter-spacing:-0.273px;">P (English)</div><div class="b" style="left:69px;top:680px;width:385px;height:38px;background:#232629;"></div><svg class="i" style="left:102.5px;top:687px;color:#fcfcfc" width="22" height="22" viewBox="0 0 16 16"><path d="M5.4 2.8l5.2 5.2-5.2 5.2" fill="none" stroke="currentColor" stroke-width="0.9" /></svg><div class="b" style="left:122.5px;top:698px;width:6px;height:1px;background:#5b5f63;"></div><svg class="i" style="left:134px;top:686px;color:#fcfcfc" width="24" height="24" viewBox="0 0 16 16"><path d="M2 5l3-3v3z" fill="currentColor" /><path d="M5 2.5h8.5v3M2.5 5v8.5h2" fill="none" stroke="currentColor" stroke-width="1" /><path d="M6.5 5.5v8h7M6.5 9.5l2.5-3 1.6 1 2.6-2.6M6.8 9.8l3 3 1.4-1 1.8 1.4" fill="none" stroke="currentColor" stroke-width="0.9" /></svg><div class="t" style="top:686.82px;color:#fcfcfc;left:167px;letter-spacing:-0.236px;">XbarR English</div><svg class="i" style="left:102.5px;top:725px;color:#fcfcfc" width="22" height="22" viewBox="0 0 16 16"><path d="M5.4 2.8l5.2 5.2-5.2 5.2" fill="none" stroke="currentColor" stroke-width="0.9" /></svg><div class="b" style="left:122.5px;top:736px;width:6px;height:1px;background:#5b5f63;"></div><svg class="i" style="left:134px;top:724px;color:#fcfcfc" width="24" height="24" viewBox="0 0 16 16"><path d="M3 3h3.4v3.4H3z" fill="#3daee9" /><path d="M2.5 2.5h11v11h-11zM6.2 2.5v11M9.8 2.5v11M2.5 6.2h11M2.5 9.8h11" fill="none" stroke="currentColor" stroke-width="1" /></svg><div class="t" style="top:724.82px;color:#fcfcfc;left:167px;letter-spacing:-0.073px;">01 German data (since 24.03.2025</div><div class="b" style="left:69px;top:755px;width:385px;height:37px;background:#232629;"></div><svg class="i" style="left:102.5px;top:762px;color:#fcfcfc" width="22" height="22" viewBox="0 0 16 16"><path d="M5.4 2.8l5.2 5.2-5.2 5.2" fill="none" stroke="currentColor" stroke-width="0.9" /></svg><div class="b" style="left:122.5px;top:773px;width:6px;height:1px;background:#5b5f63;"></div><svg class="i" style="left:134px;top:761px;color:#fcfcfc" width="24" height="24" viewBox="0 0 16 16"><path d="M2 5l3-3v3z" fill="currentColor" /><path d="M5 2.5h8.5v3M2.5 5v8.5h2" fill="none" stroke="currentColor" stroke-width="1" /><path d="M6.5 5.5v8h7M6.5 9.5l2.5-3 1.6 1 2.6-2.6M6.8 9.8l3 3 1.4-1 1.8 1.4" fill="none" stroke="currentColor" stroke-width="0.9" /></svg><div class="t" style="top:761.82px;color:#fcfcfc;left:167px;letter-spacing:-0.215px;">01 XmR German (since 24.03.2025</div></div>
<div class="b" style="left:83px;top:193px;width:1.3px;height:7px;background:#5b5f63;"></div>
<div class="b" style="left:113px;top:231px;width:1.3px;height:7px;background:#5b5f63;"></div>
<div class="b" style="left:113px;top:258px;width:1.3px;height:506px;background:#5b5f63;"></div>
<div class="b" style="left:143px;top:268px;width:1.3px;height:168px;background:#5b5f63;"></div>
<div class="b" style="left:69px;top:1380px;width:385px;height:1px;background:#4d5156;"></div>
<div class="b" style="left:69px;top:1381px;width:385px;height:30px;background:#1b1e20;"></div>
<div class="b" style="left:74px;top:1391px;width:235px;height:12px;background:#505559;border-radius:6px;box-shadow:inset 0 0 0 1px #5b6064"></div>
<div class="b" style="left:453.7px;top:67px;width:1.4px;height:1344px;background:#121416;"></div>
<div class="b" style="left:455px;top:67px;width:1344px;height:33px;background:#2a2e32;"></div>
<div class="b" style="left:455px;top:68px;width:1344px;height:2.5px;background:#393d43;"></div>
<div class="t" style="top:73.02px;color:#1d2023;left:466.2px;letter-spacing:-0.600px;">P ...</div>
<svg class="i" style="left:507.2px;top:78.10000000000001px" width="15.6" height="15.6"><path d="M2 2L13.6 13.6M13.6 2L2 13.6" stroke="#0c0e0f" stroke-width="1.7" fill="none"/></svg>
<div class="b" style="left:534px;top:71px;width:1px;height:29px;background:#3a3e43;"></div>
<div class="t" style="top:73.02px;color:#1d2023;left:546.7px;letter-spacing:-0.313px;">Xm...</div>
<svg class="i" style="left:601.2px;top:78.10000000000001px" width="15.6" height="15.6"><path d="M2 2L13.6 13.6M13.6 2L2 13.6" stroke="#0c0e0f" stroke-width="1.7" fill="none"/></svg>
<div class="b" style="left:628px;top:71px;width:1px;height:29px;background:#3a3e43;"></div>
<div class="b" style="left:629px;top:71px;width:88px;height:29px;background:#3daee9;"></div>
<div class="t" style="top:73.02px;color:#2c4a5c;left:640.2px;letter-spacing:-0.600px;">Ge...</div>
<svg class="i" style="left:688.7px;top:78.10000000000001px" width="15.6" height="15.6"><path d="M2 2L13.6 13.6M13.6 2L2 13.6" stroke="#fcfcfc" stroke-width="1.7" fill="none"/></svg>
<div class="t" style="top:73.02px;color:#1d2023;left:727.95px;letter-spacing:-0.313px;">Xm...</div>
<svg class="i" style="left:782.2px;top:78.10000000000001px" width="15.6" height="15.6"><path d="M2 2L13.6 13.6M13.6 2L2 13.6" stroke="#0c0e0f" stroke-width="1.7" fill="none"/></svg>
<div class="b" style="left:809px;top:71px;width:1px;height:29px;background:#3a3e43;"></div>
<div class="t" style="top:73.02px;color:#1d2023;left:822.2px;letter-spacing:-0.600px;">En...</div>
<svg class="i" style="left:869.2px;top:78.10000000000001px" width="15.6" height="15.6"><path d="M2 2L13.6 13.6M13.6 2L2 13.6" stroke="#0c0e0f" stroke-width="1.7" fill="none"/></svg>
<div class="b" style="left:896px;top:71px;width:1px;height:29px;background:#3a3e43;"></div>
<div class="t" style="top:73.02px;color:#1d2023;left:908.7px;letter-spacing:-0.600px;">Xb...</div>
<svg class="i" style="left:956.2px;top:78.10000000000001px" width="15.6" height="15.6"><path d="M2 2L13.6 13.6M13.6 2L2 13.6" stroke="#0c0e0f" stroke-width="1.7" fill="none"/></svg>
<div class="b" style="left:983px;top:71px;width:1px;height:29px;background:#3a3e43;"></div>
<div class="t" style="top:73.02px;color:#1d2023;left:998.7px;letter-spacing:-0.600px;">Xb...</div>
<svg class="i" style="left:1049.2px;top:78.10000000000001px" width="15.6" height="15.6"><path d="M2 2L13.6 13.6M13.6 2L2 13.6" stroke="#0c0e0f" stroke-width="1.7" fill="none"/></svg>
<div class="b" style="left:1076px;top:71px;width:1px;height:29px;background:#3a3e43;"></div>
<div class="t" style="top:73.02px;color:#1d2023;left:1088.7px;letter-spacing:-0.600px;">P ...</div>
<svg class="i" style="left:1130.2px;top:78.10000000000001px" width="15.6" height="15.6"><path d="M2 2L13.6 13.6M13.6 2L2 13.6" stroke="#0c0e0f" stroke-width="1.7" fill="none"/></svg>
<div class="b" style="left:1157px;top:71px;width:1px;height:29px;background:#3a3e43;"></div>
<div class="t" style="top:73.02px;color:#1d2023;left:1171.2px;letter-spacing:-0.277px;">01 XmR German (since ...</div>
<svg class="i" style="left:1394.2px;top:78.10000000000001px" width="15.6" height="15.6"><path d="M2 2L13.6 13.6M13.6 2L2 13.6" stroke="#0c0e0f" stroke-width="1.7" fill="none"/></svg>
<div class="b" style="left:1421px;top:71px;width:1px;height:29px;background:#3a3e43;"></div>
<div class="t" style="top:73.02px;color:#1d2023;left:1434.7px;letter-spacing:-0.096px;">01 German data (since ...</div>
<svg class="i" style="left:1656.2px;top:78.10000000000001px" width="15.6" height="15.6"><path d="M2 2L13.6 13.6M13.6 2L2 13.6" stroke="#0c0e0f" stroke-width="1.7" fill="none"/></svg>
<div class="b" style="left:1683px;top:71px;width:1px;height:29px;background:#3a3e43;"></div>
<svg class="i" style="left:1776px;top:77.3px" width="16" height="16"><path d="M2 2L14 14M14 2L2 14" stroke="#0c0e0f" stroke-width="1.7" fill="none"/></svg><svg class="i" style="left:1748.5px;top:76.2px" width="16" height="20"><path d="M4.4 2.6H11.7" stroke="#0c0e0f" stroke-width="2.4" fill="none"/><path d="M5.2 2v9M10.9 2v9M2.6 11.2H13.6M8 11.2V18.4" stroke="#0c0e0f" stroke-width="1.7" fill="none"/></svg><svg class="i" style="left:1719px;top:76.64999999999999px" width="16" height="16"><path d="M5.9 4.6V2.3H13.1V9.1H11" stroke="#0c0e0f" stroke-width="1.7" fill="none"/><path d="M5.1 2.2H13.9" stroke="#0c0e0f" stroke-width="2.2"/><path d="M2.9 6.6H10.3V13.8H2.9z" stroke="#0c0e0f" stroke-width="1.7" fill="none"/></svg><svg class="i" style="left:1692px;top:81.3px" width="14" height="8"><path d="M1.2 1H12.8L7 7z" fill="#0c0e0f"/></svg>
<div class="b" style="left:455px;top:100px;width:1344px;height:3px;background:#3daee9;"></div>
<div class="b" style="left:455px;top:103px;width:1344px;height:1309px;background:#1b1e20;"></div>
<div class="b" style="left:455px;top:104px;width:1313px;height:50px;background:#31363b;"></div>
<div class="b" style="left:455px;top:153px;width:1313px;height:2px;background:#4b4f54;"></div>
<div class="b" style="left:750px;top:104px;width:228px;height:50px;background:#2f5065;"></div>
<div class="b" style="left:748.8px;top:104px;width:1.5px;height:50px;background:#4e5257;"></div>
<div class="b" style="left:976.8px;top:104px;width:1.5px;height:50px;background:#4e5257;"></div>
<div class="b" style="left:1215.8px;top:104px;width:1.5px;height:50px;background:#4e5257;"></div>
<div class="b" style="left:1528.8px;top:104px;width:1.5px;height:50px;background:#4e5257;"></div>
<div class="b" style="left:0;top:0;width:1768px;height:1380px;overflow:hidden"><svg class="i" style="left:503px;top:118px;color:#fcfcfc" width="24" height="24" viewBox="0 0 16 16"><path d="M8 4a5 5 0 1 0 .01 0z" fill="none" stroke="currentColor" stroke-width="1" /><path d="M8 2.1a1.1 1.1 0 1 0 .01 0z" fill="none" stroke="currentColor" stroke-width="0.8" /><path d="M11.9 5.1l1-1" fill="none" stroke="currentColor" stroke-width="1" /><path d="M8.4 6.9L10.3 8.6" fill="none" stroke="currentColor" stroke-width="1.6" /></svg><div class="t" style="top:118.02px;color:#fcfcfc;left:536px;letter-spacing:0.046px;">Date {Date &amp; Time} [Y]</div><svg class="i" style="left:759px;top:118px;color:#fcfcfc" width="24" height="24" viewBox="0 0 16 16"><path d="M2 2.5h11.8M2 5h6.6M2 7.6h11.8M2 10.1h4.8M2 12.6h7.7" fill="none" stroke="currentColor" stroke-width="0.9" /><path d="M12 13h1.8v1H12z" fill="currentColor" /></svg><div class="t" style="top:118.02px;color:#fcfcfc;left:792px;font-weight:700;letter-spacing:0.111px;">Words {Integer} [X]</div><svg class="i" style="left:989px;top:118px;color:#fcfcfc" width="24" height="24" viewBox="0 0 16 16"><path d="M2 2.5h11.8M2 5h6.6M2 7.6h11.8M2 10.1h4.8M2 12.6h7.7" fill="none" stroke="currentColor" stroke-width="0.9" /><path d="M12 13h1.8v1H12z" fill="currentColor" /></svg><div class="t" style="top:118.02px;color:#fcfcfc;left:1022px;letter-spacing:0.231px;">Correct {Integer} [Y]</div><svg class="i" style="left:1228px;top:118px;color:#fcfcfc" width="24" height="24" viewBox="0 0 16 16"><path d="M8.4 2.6c-2.6-.9-3.6.4-3.6 2.2V14M2.6 6.6h5" fill="none" stroke="currentColor" stroke-width="1" /><path d="M9.4 10.2l3.4 3.4M12.8 10.2l-3.4 3.4" fill="none" stroke="currentColor" stroke-width="1.1" /></svg><div class="t" style="top:118.02px;color:#fcfcfc;left:1260px;letter-spacing:0.190px;">*PercentCorrect {Double} [Y]</div><svg class="i" style="left:1541px;top:118px;color:#fcfcfc" width="24" height="24" viewBox="0 0 16 16"><path d="M8.4 2.6c-2.6-.9-3.6.4-3.6 2.2V14M2.6 6.6h5" fill="none" stroke="currentColor" stroke-width="1" /><path d="M9.4 10.2l3.4 3.4M12.8 10.2l-3.4 3.4" fill="none" stroke="currentColor" stroke-width="1.1" /></svg><div class="t" style="top:118.02px;color:#fcfcfc;left:1574px;">*mr(PercentCorrect) {Double} [Y]</div><div class="b" style="left:455px;top:155px;width:37px;height:1225px;background:#2f5065;"></div><div class="b" style="left:491px;top:155px;width:2px;height:1225px;background:#5d7788;"></div><div class="b" style="left:750px;top:155px;width:228px;height:1225px;background:#3daee9;"></div><div class="b" style="left:493px;top:199px;width:1275px;height:1px;background:#2b2e31;"></div><div class="b" style="left:750px;top:199px;width:228px;height:1px;background:#1b2933;"></div><div class="b" style="left:455px;top:199px;width:37px;height:1px;background:#26404f;"></div><div class="t" style="top:165.52px;color:#fcfcfc;left:463.6px;font-weight:700;">1</div><div class="t" style="top:164.52px;color:#fcfcfc;left:498px;">21.02.2025</div><div class="t" style="top:164.52px;color:#fcfcfc;left:755px;">15</div><div class="t" style="top:164.52px;color:#fcfcfc;left:984px;">13</div><div class="t" style="top:164.52px;color:#fcfcfc;left:1222px;">0,87</div><div class="t" style="top:164.52px;color:#e00000;left:1536px;font-weight:700;">-</div><div class="b" style="left:493px;top:244px;width:1275px;height:1px;background:#2b2e31;"></div><div class="b" style="left:750px;top:244px;width:228px;height:1px;background:#1b2933;"></div><div class="b" style="left:455px;top:244px;width:37px;height:1px;background:#26404f;"></div><div class="t" style="top:210.52px;color:#fcfcfc;left:463.6px;font-weight:700;">2</div><div class="t" style="top:209.52px;color:#fcfcfc;left:498px;">22.02.2025</div><div class="t" style="top:209.52px;color:#fcfcfc;left:755px;">20</div><div class="t" style="top:209.52px;color:#fcfcfc;left:984px;">17</div><div class="t" style="top:209.52px;color:#fcfcfc;left:1222px;">0,85</div><div class="t" style="top:209.52px;color:#fcfcfc;left:1536px;">0,02</div><div class="b" style="left:493px;top:289px;width:1275px;height:1px;background:#2b2e31;"></div><div class="b" style="left:750px;top:289px;width:228px;height:1px;background:#1b2933;"></div><div class="b" style="left:455px;top:289px;width:37px;height:1px;background:#26404f;"></div><div class="t" style="top:255.52px;color:#fcfcfc;left:463.6px;font-weight:700;">3</div><div class="t" style="top:254.52px;color:#fcfcfc;left:498px;">23.02.2025</div><div class="t" style="top:254.52px;color:#fcfcfc;left:755px;">15</div><div class="t" style="top:254.52px;color:#fcfcfc;left:984px;">13</div><div class="t" style="top:254.52px;color:#fcfcfc;left:1222px;">0,87</div><div class="t" style="top:254.52px;color:#fcfcfc;left:1536px;">0,03</div><div class="b" style="left:493px;top:334px;width:1275px;height:1px;background:#2b2e31;"></div><div class="b" style="left:750px;top:334px;width:228px;height:1px;background:#1b2933;"></div><div class="b" style="left:455px;top:334px;width:37px;height:1px;background:#26404f;"></div><div class="t" style="top:300.52px;color:#fcfcfc;left:463.6px;font-weight:700;">4</div><div class="t" style="top:299.52px;color:#fcfcfc;left:498px;">24.02.2025</div><div class="t" style="top:299.52px;color:#fcfcfc;left:755px;">16</div><div class="t" style="top:299.52px;color:#fcfcfc;left:984px;">14</div><div class="t" style="top:299.52px;color:#fcfcfc;left:1222px;">0,88</div><div class="t" style="top:299.52px;color:#fcfcfc;left:1536px;">0,01</div><div class="b" style="left:493px;top:379px;width:1275px;height:1px;background:#2b2e31;"></div><div class="b" style="left:750px;top:379px;width:228px;height:1px;background:#1b2933;"></div><div class="b" style="left:455px;top:379px;width:37px;height:1px;background:#26404f;"></div><div class="t" style="top:345.52px;color:#fcfcfc;left:463.6px;font-weight:700;">5</div><div class="t" style="top:344.52px;color:#fcfcfc;left:498px;">25.02.2025</div><div class="t" style="top:344.52px;color:#fcfcfc;left:755px;">18</div><div class="t" style="top:344.52px;color:#fcfcfc;left:984px;">15</div><div class="t" style="top:344.52px;color:#fcfcfc;left:1222px;">0,83</div><div class="t" style="top:344.52px;color:#fcfcfc;left:1536px;">0,04</div><div class="b" style="left:493px;top:424px;width:1275px;height:1px;background:#2b2e31;"></div><div class="b" style="left:750px;top:424px;width:228px;height:1px;background:#1b2933;"></div><div class="b" style="left:455px;top:424px;width:37px;height:1px;background:#26404f;"></div><div class="t" style="top:390.52px;color:#fcfcfc;left:463.6px;font-weight:700;">6</div><div class="t" style="top:389.52px;color:#fcfcfc;left:498px;">26.02.2025</div><div class="t" style="top:389.52px;color:#fcfcfc;left:755px;">21</div><div class="t" style="top:389.52px;color:#fcfcfc;left:984px;">18</div><div class="t" style="top:389.52px;color:#fcfcfc;left:1222px;">0,86</div><div class="t" style="top:389.52px;color:#fcfcfc;left:1536px;">0,02</div><div class="b" style="left:493px;top:469px;width:1275px;height:1px;background:#2b2e31;"></div><div class="b" style="left:750px;top:469px;width:228px;height:1px;background:#1b2933;"></div><div class="b" style="left:455px;top:469px;width:37px;height:1px;background:#26404f;"></div><div class="t" style="top:435.52px;color:#fcfcfc;left:463.6px;font-weight:700;">7</div><div class="t" style="top:434.52px;color:#fcfcfc;left:498px;">27.02.2025</div><div class="t" style="top:434.52px;color:#fcfcfc;left:755px;">17</div><div class="t" style="top:434.52px;color:#fcfcfc;left:984px;">14</div><div class="t" style="top:434.52px;color:#fcfcfc;left:1222px;">0,82</div><div class="t" style="top:434.52px;color:#fcfcfc;left:1536px;">0,03</div><div class="b" style="left:493px;top:514px;width:1275px;height:1px;background:#2b2e31;"></div><div class="b" style="left:750px;top:514px;width:228px;height:1px;background:#1b2933;"></div><div class="b" style="left:455px;top:514px;width:37px;height:1px;background:#26404f;"></div><div class="t" style="top:480.52px;color:#fcfcfc;left:463.6px;font-weight:700;">8</div><div class="t" style="top:479.52px;color:#fcfcfc;left:498px;">28.02.2025</div><div class="t" style="top:479.52px;color:#fcfcfc;left:755px;">19</div><div class="t" style="top:479.52px;color:#fcfcfc;left:984px;">17</div><div class="t" style="top:479.52px;color:#fcfcfc;left:1222px;">0,89</div><div class="t" style="top:479.52px;color:#fcfcfc;left:1536px;">0,09</div><div class="b" style="left:493px;top:559px;width:1275px;height:1px;background:#2b2e31;"></div><div class="b" style="left:750px;top:559px;width:228px;height:1px;background:#1b2933;"></div><div class="b" style="left:455px;top:559px;width:37px;height:1px;background:#26404f;"></div><div class="t" style="top:525.52px;color:#fcfcfc;left:463.6px;font-weight:700;">9</div><div class="t" style="top:524.52px;color:#fcfcfc;left:498px;">1.03.2025</div><div class="t" style="top:524.52px;color:#fcfcfc;left:755px;">18</div><div class="t" style="top:524.52px;color:#fcfcfc;left:984px;">16</div><div class="t" style="top:524.52px;color:#fcfcfc;left:1222px;">0,89</div><div class="t" style="top:524.52px;color:#fcfcfc;left:1536px;">0,10</div><div class="b" style="left:493px;top:604px;width:1275px;height:1px;background:#2b2e31;"></div><div class="b" style="left:750px;top:604px;width:228px;height:1px;background:#1b2933;"></div><div class="b" style="left:455px;top:604px;width:37px;height:1px;background:#26404f;"></div><div class="t" style="top:570.52px;color:#fcfcfc;left:463.6px;font-weight:700;">10</div><div class="t" style="top:569.52px;color:#fcfcfc;left:498px;">2.03.2025</div><div class="t" style="top:569.52px;color:#fcfcfc;left:755px;">13</div><div class="t" style="top:569.52px;color:#fcfcfc;left:984px;">11</div><div class="t" style="top:569.52px;color:#fcfcfc;left:1222px;">0,85</div><div class="t" style="top:569.52px;color:#fcfcfc;left:1536px;">0,37</div><div class="b" style="left:493px;top:649px;width:1275px;height:1px;background:#2b2e31;"></div><div class="b" style="left:750px;top:649px;width:228px;height:1px;background:#1b2933;"></div><div class="b" style="left:455px;top:649px;width:37px;height:1px;background:#26404f;"></div><div class="t" style="top:615.52px;color:#fcfcfc;left:463.6px;font-weight:700;">11</div><div class="t" style="top:614.52px;color:#fcfcfc;left:498px;">3.03.2025</div><div class="t" style="top:614.52px;color:#fcfcfc;left:755px;">20</div><div class="t" style="top:614.52px;color:#fcfcfc;left:984px;">13</div><div class="t" style="top:614.52px;color:#fcfcfc;left:1222px;">0,65</div><div class="t" style="top:614.52px;color:#fcfcfc;left:1536px;">0,49</div><div class="b" style="left:493px;top:694px;width:1275px;height:1px;background:#2b2e31;"></div><div class="b" style="left:750px;top:694px;width:228px;height:1px;background:#1b2933;"></div><div class="b" style="left:455px;top:694px;width:37px;height:1px;background:#26404f;"></div><div class="t" style="top:660.52px;color:#fcfcfc;left:463.6px;font-weight:700;">12</div><div class="t" style="top:659.52px;color:#fcfcfc;left:498px;">4.03.2025</div><div class="t" style="top:659.52px;color:#fcfcfc;left:755px;">14</div><div class="t" style="top:659.52px;color:#fcfcfc;left:984px;">13</div><div class="t" style="top:659.52px;color:#fcfcfc;left:1222px;">0,93</div><div class="t" style="top:659.52px;color:#fcfcfc;left:1536px;">0,02</div><div class="b" style="left:493px;top:739px;width:1275px;height:1px;background:#2b2e31;"></div><div class="b" style="left:750px;top:739px;width:228px;height:1px;background:#1b2933;"></div><div class="b" style="left:455px;top:739px;width:37px;height:1px;background:#26404f;"></div><div class="t" style="top:705.52px;color:#fcfcfc;left:463.6px;font-weight:700;">13</div><div class="t" style="top:704.52px;color:#fcfcfc;left:498px;">5.03.2025</div><div class="t" style="top:704.52px;color:#fcfcfc;left:755px;">14</div><div class="t" style="top:704.52px;color:#fcfcfc;left:984px;">11</div><div class="t" style="top:704.52px;color:#fcfcfc;left:1222px;">0,79</div><div class="t" style="top:704.52px;color:#fcfcfc;left:1536px;">0,29</div><div class="b" style="left:493px;top:784px;width:1275px;height:1px;background:#2b2e31;"></div><div class="b" style="left:750px;top:784px;width:228px;height:1px;background:#1b2933;"></div><div class="b" style="left:455px;top:784px;width:37px;height:1px;background:#26404f;"></div><div class="t" style="top:750.52px;color:#fcfcfc;left:463.6px;font-weight:700;">14</div><div class="t" style="top:749.52px;color:#fcfcfc;left:498px;">6.03.2025</div><div class="t" style="top:749.52px;color:#fcfcfc;left:755px;">14</div><div class="t" style="top:749.52px;color:#fcfcfc;left:984px;">14</div><div class="t" style="top:749.52px;color:#fcfcfc;left:1222px;">1,00</div><div class="t" style="top:749.52px;color:#fcfcfc;left:1536px;">0,29</div><div class="b" style="left:493px;top:829px;width:1275px;height:1px;background:#2b2e31;"></div><div class="b" style="left:750px;top:829px;width:228px;height:1px;background:#1b2933;"></div><div class="b" style="left:455px;top:829px;width:37px;height:1px;background:#26404f;"></div><div class="t" style="top:795.52px;color:#fcfcfc;left:463.6px;font-weight:700;">15</div><div class="t" style="top:794.52px;color:#fcfcfc;left:498px;">7.03.2025</div><div class="t" style="top:794.52px;color:#fcfcfc;left:755px;">12</div><div class="t" style="top:794.52px;color:#fcfcfc;left:984px;">10</div><div class="t" style="top:794.52px;color:#fcfcfc;left:1222px;">0,83</div><div class="t" style="top:794.52px;color:#fcfcfc;left:1536px;">0,01</div><div class="b" style="left:493px;top:874px;width:1275px;height:1px;background:#2b2e31;"></div><div class="b" style="left:750px;top:874px;width:228px;height:1px;background:#1b2933;"></div><div class="b" style="left:455px;top:874px;width:37px;height:1px;background:#26404f;"></div><div class="t" style="top:840.52px;color:#fcfcfc;left:463.6px;font-weight:700;">16</div><div class="t" style="top:839.52px;color:#fcfcfc;left:498px;">8.03.2025</div><div class="t" style="top:839.52px;color:#fcfcfc;left:755px;">13</div><div class="t" style="top:839.52px;color:#fcfcfc;left:984px;">11</div><div class="t" style="top:839.52px;color:#fcfcfc;left:1222px;">0,85</div><div class="t" style="top:839.52px;color:#fcfcfc;left:1536px;">0,08</div><div class="b" style="left:493px;top:919px;width:1275px;height:1px;background:#2b2e31;"></div><div class="b" style="left:750px;top:919px;width:228px;height:1px;background:#1b2933;"></div><div class="b" style="left:455px;top:919px;width:37px;height:1px;background:#26404f;"></div><div class="t" style="top:885.52px;color:#fcfcfc;left:463.6px;font-weight:700;">17</div><div class="t" style="top:884.52px;color:#fcfcfc;left:498px;">9.03.2025</div><div class="t" style="top:884.52px;color:#fcfcfc;left:755px;">15</div><div class="t" style="top:884.52px;color:#fcfcfc;left:984px;">13</div><div class="t" style="top:884.52px;color:#fcfcfc;left:1222px;">0,87</div><div class="t" style="top:884.52px;color:#fcfcfc;left:1536px;">0,20</div><div class="b" style="left:493px;top:964px;width:1275px;height:1px;background:#2b2e31;"></div><div class="b" style="left:750px;top:964px;width:228px;height:1px;background:#1b2933;"></div><div class="b" style="left:455px;top:964px;width:37px;height:1px;background:#26404f;"></div><div class="t" style="top:930.52px;color:#fcfcfc;left:463.6px;font-weight:700;">18</div><div class="t" style="top:929.52px;color:#fcfcfc;left:498px;">10.03.2025</div><div class="t" style="top:929.52px;color:#fcfcfc;left:755px;">14</div><div class="t" style="top:929.52px;color:#fcfcfc;left:984px;">12</div><div class="t" style="top:929.52px;color:#fcfcfc;left:1222px;">0,86</div><div class="t" style="top:929.52px;color:#fcfcfc;left:1536px;">0,01</div><div class="b" style="left:493px;top:1009px;width:1275px;height:1px;background:#2b2e31;"></div><div class="b" style="left:750px;top:1009px;width:228px;height:1px;background:#1b2933;"></div><div class="b" style="left:455px;top:1009px;width:37px;height:1px;background:#26404f;"></div><div class="t" style="top:975.52px;color:#fcfcfc;left:463.6px;font-weight:700;">19</div><div class="t" style="top:974.52px;color:#fcfcfc;left:498px;">11.03.2025</div><div class="t" style="top:974.52px;color:#fcfcfc;left:755px;">12</div><div class="t" style="top:974.52px;color:#fcfcfc;left:984px;">10</div><div class="t" style="top:974.52px;color:#fcfcfc;left:1222px;">0,83</div><div class="t" style="top:974.52px;color:#fcfcfc;left:1536px;">0,29</div><div class="b" style="left:493px;top:1054px;width:1275px;height:1px;background:#2b2e31;"></div><div class="b" style="left:750px;top:1054px;width:228px;height:1px;background:#1b2933;"></div><div class="b" style="left:455px;top:1054px;width:37px;height:1px;background:#26404f;"></div><div class="t" style="top:1020.52px;color:#fcfcfc;left:463.6px;font-weight:700;">20</div><div class="t" style="top:1019.52px;color:#fcfcfc;left:498px;">12.03.2025</div><div class="t" style="top:1019.52px;color:#fcfcfc;left:755px;">19</div><div class="t" style="top:1019.52px;color:#fcfcfc;left:984px;">15</div><div class="t" style="top:1019.52px;color:#fcfcfc;left:1222px;">0,79</div><div class="t" style="top:1019.52px;color:#fcfcfc;left:1536px;">0,34</div><div class="b" style="left:493px;top:1099px;width:1275px;height:1px;background:#2b2e31;"></div><div class="b" style="left:750px;top:1099px;width:228px;height:1px;background:#1b2933;"></div><div class="b" style="left:455px;top:1099px;width:37px;height:1px;background:#26404f;"></div><div class="t" style="top:1065.52px;color:#fcfcfc;left:463.6px;font-weight:700;">21</div><div class="t" style="top:1064.52px;color:#fcfcfc;left:498px;">13.03.2025</div><div class="t" style="top:1064.52px;color:#fcfcfc;left:755px;">12</div><div class="t" style="top:1064.52px;color:#fcfcfc;left:984px;">9</div><div class="t" style="top:1064.52px;color:#fcfcfc;left:1222px;">0,75</div><div class="t" style="top:1064.52px;color:#fcfcfc;left:1536px;">0,01</div><div class="b" style="left:493px;top:1144px;width:1275px;height:1px;background:#2b2e31;"></div><div class="b" style="left:750px;top:1144px;width:228px;height:1px;background:#1b2933;"></div><div class="b" style="left:455px;top:1144px;width:37px;height:1px;background:#26404f;"></div><div class="t" style="top:1110.52px;color:#fcfcfc;left:463.6px;font-weight:700;">22</div><div class="t" style="top:1109.52px;color:#fcfcfc;left:498px;">14.03.2025</div><div class="t" style="top:1109.52px;color:#fcfcfc;left:755px;">17</div><div class="t" style="top:1109.52px;color:#fcfcfc;left:984px;">12</div><div class="t" style="top:1109.52px;color:#fcfcfc;left:1222px;">0,71</div><div class="t" style="top:1109.52px;color:#fcfcfc;left:1536px;">0,13</div><div class="b" style="left:493px;top:1189px;width:1275px;height:1px;background:#2b2e31;"></div><div class="b" style="left:750px;top:1189px;width:228px;height:1px;background:#1b2933;"></div><div class="b" style="left:455px;top:1189px;width:37px;height:1px;background:#26404f;"></div><div class="t" style="top:1155.52px;color:#fcfcfc;left:463.6px;font-weight:700;">23</div><div class="t" style="top:1154.52px;color:#fcfcfc;left:498px;">15.03.2025</div><div class="t" style="top:1154.52px;color:#fcfcfc;left:755px;">15</div><div class="t" style="top:1154.52px;color:#fcfcfc;left:984px;">9</div><div class="t" style="top:1154.52px;color:#fcfcfc;left:1222px;">0,60</div><div class="t" style="top:1154.52px;color:#fcfcfc;left:1536px;">0,11</div><div class="b" style="left:493px;top:1234px;width:1275px;height:1px;background:#2b2e31;"></div><div class="b" style="left:750px;top:1234px;width:228px;height:1px;background:#1b2933;"></div><div class="b" style="left:455px;top:1234px;width:37px;height:1px;background:#26404f;"></div><div class="t" style="top:1200.52px;color:#fcfcfc;left:463.6px;font-weight:700;">24</div><div class="t" style="top:1199.52px;color:#fcfcfc;left:498px;">16.03.2025</div><div class="t" style="top:1199.52px;color:#fcfcfc;left:755px;">13</div><div class="t" style="top:1199.52px;color:#fcfcfc;left:984px;">12</div><div class="t" style="top:1199.52px;color:#fcfcfc;left:1222px;">0,92</div><div class="t" style="top:1199.52px;color:#fcfcfc;left:1536px;">0,32</div><div class="b" style="left:493px;top:1279px;width:1275px;height:1px;background:#2b2e31;"></div><div class="b" style="left:750px;top:1279px;width:228px;height:1px;background:#1b2933;"></div><div class="b" style="left:455px;top:1279px;width:37px;height:1px;background:#26404f;"></div><div class="t" style="top:1245.52px;color:#fcfcfc;left:463.6px;font-weight:700;">25</div><div class="t" style="top:1244.52px;color:#fcfcfc;left:498px;">17.03.2025</div><div class="t" style="top:1244.52px;color:#fcfcfc;left:755px;">15</div><div class="t" style="top:1244.52px;color:#fcfcfc;left:984px;">15</div><div class="t" style="top:1244.52px;color:#fcfcfc;left:1222px;">1,00</div><div class="t" style="top:1244.52px;color:#fcfcfc;left:1536px;">0,08</div><div class="b" style="left:493px;top:1324px;width:1275px;height:1px;background:#2b2e31;"></div><div class="b" style="left:750px;top:1324px;width:228px;height:1px;background:#1b2933;"></div><div class="b" style="left:455px;top:1324px;width:37px;height:1px;background:#26404f;"></div><div class="t" style="top:1290.52px;color:#fcfcfc;left:463.6px;font-weight:700;">26</div><div class="t" style="top:1289.52px;color:#fcfcfc;left:498px;">18.03.2025</div><div class="t" style="top:1289.52px;color:#fcfcfc;left:755px;">14</div><div class="t" style="top:1289.52px;color:#fcfcfc;left:984px;">11</div><div class="t" style="top:1289.52px;color:#fcfcfc;left:1222px;">0,79</div><div class="t" style="top:1289.52px;color:#fcfcfc;left:1536px;">0,21</div><div class="b" style="left:493px;top:1369px;width:1275px;height:1px;background:#2b2e31;"></div><div class="b" style="left:750px;top:1369px;width:228px;height:1px;background:#1b2933;"></div><div class="b" style="left:455px;top:1369px;width:37px;height:1px;background:#26404f;"></div><div class="t" style="top:1335.52px;color:#fcfcfc;left:463.6px;font-weight:700;">27</div><div class="t" style="top:1334.52px;color:#fcfcfc;left:498px;">19.03.2025</div><div class="t" style="top:1334.52px;color:#fcfcfc;left:755px;">17</div><div class="t" style="top:1334.52px;color:#fcfcfc;left:984px;">13</div><div class="t" style="top:1334.52px;color:#fcfcfc;left:1222px;">0,76</div><div class="t" style="top:1334.52px;color:#fcfcfc;left:1536px;">0,02</div><div class="b" style="left:493px;top:1414px;width:1275px;height:1px;background:#2b2e31;"></div><div class="b" style="left:750px;top:1414px;width:228px;height:1px;background:#1b2933;"></div><div class="b" style="left:455px;top:1414px;width:37px;height:1px;background:#26404f;"></div><div class="b" style="left:749px;top:155px;width:1px;height:1225px;background:#2b2e31;"></div><div class="b" style="left:978px;top:155px;width:1px;height:1225px;background:#2b2e31;"></div><div class="b" style="left:1217px;top:155px;width:1px;height:1225px;background:#2b2e31;"></div><div class="b" style="left:1530px;top:155px;width:1px;height:1225px;background:#2b2e31;"></div></div>
<div class="b" style="left:1767px;top:104px;width:2px;height:1275px;background:#4c4e52;"></div>
<div class="b" style="left:455px;top:1379px;width:1312px;height:2px;background:#4c4e52;"></div>
<div class="b" style="left:1778px;top:108.5px;width:11px;height:781.5px;background:#335a72;border-radius:5.5px;box-shadow:inset 0 0 0 1px #376b89"></div>
<div class="b" style="left:459.5px;top:1390px;width:1193px;height:11px;background:#335a72;border-radius:5.5px;box-shadow:inset 0 0 0 1px #376b89"></div>
<div class="b" style="left:455px;top:1409px;width:1344px;height:3px;background:#2a2e32;"></div>
<div class="b" style="left:1799px;top:67px;width:1px;height:1345px;background:#1e2124;"></div>
<div class="b" style="left:1800px;top:67px;width:760px;height:1345px;background:#41464e;"></div>
<div class="b" style="left:1800px;top:67px;width:760px;height:30px;background:#2a2e32;"></div>
<div class="b" style="left:1800px;top:67px;width:212px;height:30px;background:;background:linear-gradient(#2c3035,#40454c);border-right:1px solid #3a3e43"></div>
<div class="b" style="left:1800px;top:99px;width:760px;height:1px;background:#393d43;"></div>
<div class="t" style="top:69.52px;color:#fcfcfc;left:1812px;letter-spacing:0.191px;">Properties: Column</div>
<svg class="i" style="left:1984px;top:75px" width="16" height="16"><path d="M2 2L14 14M14 2L2 14" stroke="#0c0e0f" stroke-width="1.7" fill="none"/></svg>
<svg class="i" style="left:2538px;top:74.5px" width="16" height="16"><path d="M2 2L14 14M14 2L2 14" stroke="#0c0e0f" stroke-width="1.7" fill="none"/></svg><svg class="i" style="left:2510.5px;top:73.4px" width="16" height="20"><path d="M4.4 2.6H11.7" stroke="#0c0e0f" stroke-width="2.4" fill="none"/><path d="M5.2 2v9M10.9 2v9M2.6 11.2H13.6M8 11.2V18.4" stroke="#0c0e0f" stroke-width="1.7" fill="none"/></svg><svg class="i" style="left:2481px;top:73.85px" width="16" height="16"><path d="M5.9 4.6V2.3H13.1V9.1H11" stroke="#0c0e0f" stroke-width="1.7" fill="none"/><path d="M5.1 2.2H13.9" stroke="#0c0e0f" stroke-width="2.2"/><path d="M2.9 6.6H10.3V13.8H2.9z" stroke="#0c0e0f" stroke-width="1.7" fill="none"/></svg><svg class="i" style="left:2454px;top:78.5px" width="14" height="8"><path d="M1.2 1H12.8L7 7z" fill="#0c0e0f"/></svg>
<div class="b" style="left:1994px;top:110px;width:556px;height:45px;background:#1b1e20;box-shadow:inset 0 0 0 1.4px #54585d;border-radius:7px"></div>
<div class="b" style="left:1994px;top:167px;width:556px;height:51px;background:#1b1e20;box-shadow:inset 0 0 0 1.4px #54585d;border-radius:7px"></div>
<div class="b" style="left:2258px;top:205px;width:30px;height:13px;background:#53575b;"></div>
<div class="t" style="top:122.02px;color:#fcfcfc;left:1809px;letter-spacing:0.345px;">Name:</div>
<div class="t" style="top:122.02px;color:#fcfcfc;left:2005px;letter-spacing:0.099px;">Words</div>
<div class="t" style="top:181.02px;color:#fcfcfc;left:1809px;letter-spacing:0.426px;">Comment:</div>
<div class="t" style="top:252.52px;color:#fcfcfc;left:1809px;font-weight:700;letter-spacing:0.767px;">Data</div>
<div class="t" style="top:297.52px;color:#fcfcfc;left:1809px;letter-spacing:0.085px;">Type:</div>
<div class="b" style="left:1994.6px;top:287.4px;width:555px;height:44.5px;background:#31363b;box-shadow:inset 0 0 0 1.4px #54585d;border-radius:7px"></div>
<div class="t" style="top:297.52px;color:#fcfcfc;left:2004px;letter-spacing:0.740px;">Integer</div>
<div class="t" style="top:377.52px;color:#fcfcfc;left:1809px;letter-spacing:0.237px;">Plot Designation:</div>
<div class="b" style="left:1994.6px;top:367.4px;width:555px;height:44.5px;background:#31363b;box-shadow:inset 0 0 0 1.4px #54585d;border-radius:7px"></div>
<div class="t" style="top:377.52px;color:#fcfcfc;left:2004px;">X</div>
<svg class="i" style="left:2524px;top:302px" width="18" height="16" viewBox="0 0 18 16"><path d="M2 4.5L9 11.5 16 4.5" fill="none" stroke="#fcfcfc" stroke-width="1.5"/></svg>
<svg class="i" style="left:2524px;top:382px" width="18" height="16" viewBox="0 0 18 16"><path d="M2 4.5L9 11.5 16 4.5" fill="none" stroke="#fcfcfc" stroke-width="1.5"/></svg>
<div class="t" style="top:482.52px;color:#fcfcfc;left:1809px;letter-spacing:-0.072px;">Labels:</div>
<div class="b" style="left:1994px;top:483px;width:556px;height:287px;background:#1b1e20;box-shadow:inset 0 0 0 1.4px #54585d;border-radius:7px"></div>
<div class="b" style="left:1996px;top:485px;width:552px;height:41px;background:#31363b;border-radius:5px 5px 0 0"></div>
<div class="b" style="left:1996px;top:526px;width:552px;height:2px;background:#4b4f54;"></div>
<div class="b" style="left:2063px;top:485px;width:2px;height:41px;background:#4b4f54;"></div>
<div class="t" style="top:495.52px;color:#fcfcfc;left:2007px;letter-spacing:0.284px;">Value</div>
<div class="t" style="top:495.52px;color:#fcfcfc;left:2284px;letter-spacing:0.081px;">Label</div>
<div class="b" style="left:2399px;top:781.5px;width:42.5px;height:44px;background:#31363b;box-shadow:inset 0 0 0 1.3px #595e64;border-radius:7px"></div>
<div class="b" style="left:2445px;top:781.5px;width:42.5px;height:44px;background:#31363b;box-shadow:inset 0 0 0 1.3px #595e64;border-radius:7px"></div>
<div class="b" style="left:2507px;top:781.5px;width:42.5px;height:44px;background:#31363b;box-shadow:inset 0 0 0 1.3px #595e64;border-radius:7px"></div>
<svg class="i" style="left:2408px;top:791px;color:#fcfcfc" width="24" height="24" viewBox="0 0 16 16"><path d="M8 2v12M2 8h12" fill="none" stroke="currentColor" stroke-width="0.9" /></svg>
<svg class="i" style="left:2454px;top:791px;color:#da4453" width="24" height="24" viewBox="0 0 16 16"><path d="M2.4 2.4l11.2 11.2M13.6 2.4L2.4 13.6" fill="none" stroke="currentColor" stroke-width="0.9" /></svg>
<svg class="i" style="left:2516px;top:791px;color:#fcfcfc" width="24" height="24" viewBox="0 0 16 16"><path d="M6 3h8M7.5 6h6.5M8.5 9h3" fill="none" stroke="currentColor" stroke-width="0.9" /><circle cx="3.4" cy="3" r=".8" fill="currentColor"/><circle cx="4.8" cy="6" r=".8" fill="currentColor"/><circle cx="6" cy="9" r=".8" fill="currentColor"/><path d="M12.6 7.5v5.5" fill="none" stroke="currentColor" stroke-width="0.9" /><circle cx="11.4" cy="13" r="1.6" fill="currentColor"/></svg>
<div class="b" style="left:0px;top:1411px;width:2560px;height:3px;background:#2a2e32;"></div>
<div class="b" style="left:0px;top:1413.4px;width:2560px;height:1.3px;background:#54585e;"></div>
<div class="b" style="left:0px;top:1414.5px;width:2560px;height:30px;background:#2a2e32;"></div>
<div class="t" style="top:1419.52px;color:#fcfcfc;right:1px;letter-spacing:-0.059px;">Memory used 221 MB, peak 221 MB</div>
<div class="b" style="left:887px;top:229px;width:377px;height:869px;background:#26292e;border-radius:7.5px;box-shadow:inset 0 0 0 1.6px #4f5358,0 3px 12px 1px rgba(0,0,0,.45)"></div>
<div class="b" style="left:893px;top:235px;width:364px;height:39.2px;background:;background:#2d5065;box-shadow:inset 0 0 0 2px #48b1e9;border-radius:6.5px"></div>
<div class="t" style="top:243.02px;color:#fcfcfc;left:936.2px;letter-spacing:0.121px;">Plot Data</div>
<svg class="i" style="left:1229px;top:244.6px" width="12" height="20" viewBox="0 0 12 20"><path d="M2 2l8 8-8 8" fill="none" stroke="#fcfcfc" stroke-width="1.5"/></svg>
<div class="t" style="top:282.02px;color:#fcfcfc;left:936.2px;">Analyze and Plot Data</div>
<svg class="i" style="left:1229px;top:283.6px" width="12" height="20" viewBox="0 0 12 20"><path d="M2 2l8 8-8 8" fill="none" stroke="#fcfcfc" stroke-width="1.5"/></svg>
<div class="b" style="left:900px;top:318.1px;width:350px;height:1.4px;background:#565a5f;"></div>
<div class="t" style="top:331.02px;color:#fcfcfc;left:936.2px;letter-spacing:-0.049px;">Set Column As</div>
<svg class="i" style="left:1229px;top:332.6px" width="12" height="20" viewBox="0 0 12 20"><path d="M2 2l8 8-8 8" fill="none" stroke="#fcfcfc" stroke-width="1.5"/></svg>
<div class="b" style="left:900px;top:367.1px;width:350px;height:1.4px;background:#565a5f;"></div>
<div class="t" style="top:381.02px;color:#fcfcfc;left:936.2px;letter-spacing:0.096px;">Generate Data</div>
<svg class="i" style="left:1229px;top:382.6px" width="12" height="20" viewBox="0 0 12 20"><path d="M2 2l8 8-8 8" fill="none" stroke="#fcfcfc" stroke-width="1.5"/></svg>
<div class="b" style="left:900px;top:417.1px;width:350px;height:1.4px;background:#565a5f;"></div>
<div class="t" style="top:430.02px;color:#fcfcfc;left:936.2px;letter-spacing:0.338px;">Manipulate Data</div>
<svg class="i" style="left:1229px;top:431.6px" width="12" height="20" viewBox="0 0 12 20"><path d="M2 2l8 8-8 8" fill="none" stroke="#fcfcfc" stroke-width="1.5"/></svg>
<div class="b" style="left:900px;top:466.1px;width:350px;height:1.4px;background:#565a5f;"></div>
<div class="t" style="top:480.02px;color:#fcfcfc;left:936.2px;letter-spacing:0.025px;">Selection</div>
<svg class="i" style="left:904px;top:480px;color:#fcfcfc" width="24" height="24" viewBox="0 0 16 16"><circle cx="4.7" cy="2.3" r="0.7" fill="currentColor"/><path d="M4.4 4.2L12.8 9.2 7.9 10 5.2 14z" fill="currentColor" /></svg>
<svg class="i" style="left:1229px;top:481.6px" width="12" height="20" viewBox="0 0 12 20"><path d="M2 2l8 8-8 8" fill="none" stroke="#fcfcfc" stroke-width="1.5"/></svg>
<div class="b" style="left:900px;top:516.1px;width:350px;height:1.4px;background:#565a5f;"></div>
<div class="t" style="top:529.02px;color:#fcfcfc;left:936.2px;letter-spacing:0.022px;">Sort...</div>
<svg class="i" style="left:904px;top:529px;color:#fcfcfc" width="24" height="24" viewBox="0 0 16 16"><path d="M1.9 3.7h3.8M1.9 6.6h4.4M1.9 9.5h4.4M1.9 12.7h4.4" fill="none" stroke="currentColor" stroke-width="1" /><path d="M8.8 11V3.6M6.9 5.5l1.9-1.9 1.9 1.9M11 5.8v7.6M9.1 11.5l1.9 1.9 1.9-1.9" fill="none" stroke="currentColor" stroke-width="0.85" /></svg>
<div class="t" style="top:568.02px;color:#fcfcfc;left:936.2px;letter-spacing:0.155px;">Sort Ascending</div>
<svg class="i" style="left:904px;top:568px;color:#fcfcfc" width="24" height="24" viewBox="0 0 16 16"><path d="M1.9 3.7h2.9M1.9 6.6h5.4M1.9 9.5h6.6M1.9 12.7h9.1" fill="none" stroke="currentColor" stroke-width="1" /><path d="M11 9V2.9M9 4.9l2-2 2 2" fill="none" stroke="currentColor" stroke-width="0.85" /></svg>
<div class="t" style="top:607.02px;color:#fcfcfc;left:936.2px;letter-spacing:0.092px;">Sort Descending</div>
<svg class="i" style="left:904px;top:607px;color:#fcfcfc" width="24" height="24" viewBox="0 0 16 16"><path d="M1.9 3.7h9.1M1.9 6.6h6.6M1.9 9.5h5.4M1.9 12.7h2.9" fill="none" stroke="currentColor" stroke-width="1" /><path d="M11 6.2v7.3M9 11.5l2 2 2-2" fill="none" stroke="currentColor" stroke-width="0.85" /></svg>
<div class="b" style="left:900px;top:643.1px;width:350px;height:1.4px;background:#565a5f;"></div>
<div class="t" style="top:657.02px;color:#fcfcfc;left:936.2px;letter-spacing:0.409px;">Conditional Formatting</div>
<svg class="i" style="left:1229px;top:658.6px" width="12" height="20" viewBox="0 0 12 20"><path d="M2 2l8 8-8 8" fill="none" stroke="#fcfcfc" stroke-width="1.5"/></svg>
<div class="b" style="left:900px;top:693.1px;width:350px;height:1.4px;background:#565a5f;"></div>
<div class="t" style="top:706.02px;color:#fcfcfc;left:936.2px;">Column Statistics...</div>
<svg class="i" style="left:904px;top:706px;color:#fcfcfc" width="24" height="24" viewBox="0 0 16 16"><path d="M0.9 8.1h3.6v5.8H0.9zM5.5 4.9h3.9v9H5.5zM10.2 1.9h4v12h-4z" fill="currentColor" /></svg>
<div class="b" style="left:900px;top:742.1px;width:350px;height:1.4px;background:#565a5f;"></div>
<div class="t" style="top:756.02px;color:#fcfcfc;left:936.2px;letter-spacing:0.332px;">Insert Column Left</div>
<svg class="i" style="left:904px;top:756px;color:#fcfcfc" width="24" height="24" viewBox="0 0 16 16"><path d="M6.9 2h7.2v12.1H6.9z" fill="currentColor" /><path d="M7.6 3.3h1.2v2.4h-1.2zM10.2 3.3h2.6v2.4h-2.6zM7.6 7.3h1.2v1.2h-1.2zM10.2 7.3h2.6v1.2h-2.6zM7.3 10.2h1.5v2.5h-1.5zM10.2 10.2h2.6v2.5h-2.6z" fill="#26292e" /><path d="M2 2h5v7.3H2z" fill="#26292e" /><path d="M2.45 2v7.3M6.55 2v7.3M2.45 2.3l4.1 4.6M2.45 5l4.1 4.2" fill="none" stroke="#3daee9" stroke-width="0.9" /><path d="M2.3 12l3.7-2.1v4.2z" fill="currentColor" /></svg>
<div class="t" style="top:795.02px;color:#fcfcfc;left:936.2px;letter-spacing:0.301px;">Insert Column Right</div>
<svg class="i" style="left:904px;top:795px;color:#fcfcfc" width="24" height="24" viewBox="0 0 16 16"><path d="M1.9 2h7.2v12.1H1.9z" fill="currentColor" /><path d="M7.2 3.3h1.2v2.4h-1.2zM3.2 3.3h2.6v2.4h-2.6zM7.2 7.3h1.2v1.2h-1.2zM3.2 7.3h2.6v1.2h-2.6zM7.2 10.2h1.5v2.5h-1.5zM3.2 10.2h2.6v2.5h-2.6z" fill="#26292e" /><path d="M9 2h5v7.3H9z" fill="#26292e" /><path d="M13.55 2v7.3M9.45 2v7.3M13.55 2.3l-4.1 4.6M13.55 5l-4.1 4.2" fill="none" stroke="#3daee9" stroke-width="0.9" /><path d="M13.7 12l-3.7-2.1v4.2z" fill="currentColor" /></svg>
<div class="b" style="left:900px;top:831.1px;width:350px;height:1.4px;background:#565a5f;"></div>
<div class="t" style="top:844.02px;color:#fcfcfc;left:936.2px;letter-spacing:0.330px;">Insert Multiple Columns Left</div>
<svg class="i" style="left:904px;top:844px;color:#fcfcfc" width="24" height="24" viewBox="0 0 16 16"><path d="M6.9 2h7.2v12.1H6.9z" fill="currentColor" /><path d="M7.6 3.3h1.2v2.4h-1.2zM10.2 3.3h2.6v2.4h-2.6zM7.6 7.3h1.2v1.2h-1.2zM10.2 7.3h2.6v1.2h-2.6zM7.3 10.2h1.5v2.5h-1.5zM10.2 10.2h2.6v2.5h-2.6z" fill="#26292e" /><path d="M2 2h5v7.3H2z" fill="#26292e" /><path d="M2.45 2v7.3M6.55 2v7.3M2.45 2.3l4.1 4.6M2.45 5l4.1 4.2" fill="none" stroke="#3daee9" stroke-width="0.9" /><path d="M2.3 12l3.7-2.1v4.2z" fill="currentColor" /></svg>
<div class="t" style="top:883.02px;color:#fcfcfc;left:936.2px;letter-spacing:0.320px;">Insert Multiple Columns Right</div>
<svg class="i" style="left:904px;top:883px;color:#fcfcfc" width="24" height="24" viewBox="0 0 16 16"><path d="M1.9 2h7.2v12.1H1.9z" fill="currentColor" /><path d="M7.2 3.3h1.2v2.4h-1.2zM3.2 3.3h2.6v2.4h-2.6zM7.2 7.3h1.2v1.2h-1.2zM3.2 7.3h2.6v1.2h-2.6zM7.2 10.2h1.5v2.5h-1.5zM3.2 10.2h2.6v2.5h-2.6z" fill="#26292e" /><path d="M9 2h5v7.3H9z" fill="#26292e" /><path d="M13.55 2v7.3M9.45 2v7.3M13.55 2.3l-4.1 4.6M13.55 5l-4.1 4.2" fill="none" stroke="#3daee9" stroke-width="0.9" /><path d="M13.7 12l-3.7-2.1v4.2z" fill="currentColor" /></svg>
<div class="b" style="left:900px;top:919.1px;width:350px;height:1.4px;background:#565a5f;"></div>
<div class="t" style="top:933.02px;color:#fcfcfc;left:936.2px;letter-spacing:-0.058px;">Delete Selected Column(s)</div>
<svg class="i" style="left:904px;top:933px;color:#fcfcfc" width="24" height="24" viewBox="0 0 16 16"><path d="M1.95 1.95h12.1v12.1H1.95z" fill="currentColor" /><path d="M2.9 2.8h10.2v3h-10.2zM2.9 6.6h10.2v2.6h-10.2zM2.9 10.1h10.2v2.9h-10.2z" fill="#26292e" /><path d="M4.9 2.8h6.4v10.2H4.9z" fill="#26292e" /><path d="M5.45 2.8v10.2M10.7 2.8v10.2M5.6 6l4.9-3.2M5.6 9.6l4.9-4M5.6 12.8l4.9-4" fill="none" stroke="#da4453" stroke-width="0.95" /></svg>
<div class="t" style="top:972.02px;color:#fcfcfc;left:936.2px;letter-spacing:0.143px;">Clear Content</div>
<svg class="i" style="left:904px;top:972px;color:#fcfcfc" width="24" height="24" viewBox="0 0 16 16"><path d="M0 8L5.9 1.9H16.1V14H5.9z" fill="#fcfcfc" /><path d="M7.4 5.4l5.2 5.2M12.6 5.4l-5.2 5.2" fill="none" stroke="#26292e" stroke-width="1.1" /></svg>
<div class="b" style="left:900px;top:1008.1px;width:350px;height:1.4px;background:#565a5f;"></div>
<div class="t" style="top:1021.02px;color:#fcfcfc;left:936.2px;">Delete Rows With Missing Values</div>
<svg class="i" style="left:904px;top:1021px;color:#fcfcfc" width="24" height="24" viewBox="0 0 16 16"><path d="M1.95 1.95h12.1v12.1H1.95z" fill="currentColor" /><path d="M2.9 2.9h3v10.1h-3zM6.8 2.9h2.35v10.1h-2.35zM10.05 2.9h3v10.1h-3z" fill="#26292e" /><path d="M2.9 4.9h10.15v6.1H2.9z" fill="#26292e" /><path d="M2.9 5.35h10.15M2.9 10.55h10.15M3.4 5.5l4 4.9M7 5.5l4 4.9M10.6 5.5l2.4 2.9" fill="none" stroke="#da4453" stroke-width="0.95" /></svg>
<div class="t" style="top:1060.02px;color:#fcfcfc;left:936.2px;letter-spacing:-0.039px;">Mask Rows With Missing Values</div>
<svg class="i" style="left:904px;top:1060px;color:#fcfcfc" width="24" height="24" viewBox="0 0 16 16"><path d="M2.3 13.6L13.7 2.4" fill="none" stroke="currentColor" stroke-width="1" /><path d="M0.5 7.9C3 3.9 6.3 3 9.2 3.1M13.7 5.6C14.6 6.3 15.2 7.1 15.7 7.9" fill="none" stroke="currentColor" stroke-width="1" /><path d="M4.75 8.3A3.6 3.6 0 0 1 7.7 4.15M11.9 7.7A3.6 3.6 0 0 1 7.7 11.25" fill="none" stroke="currentColor" stroke-width="1" /></svg>
<div class="b" style="left:1256.5px;top:229px;width:311.5px;height:245.7px;background:#26292e;border-radius:7.5px;box-shadow:inset 0 0 0 1.6px #4f5358,0 3px 12px 1px rgba(0,0,0,.45)"></div>
<div class="b" style="left:1262.5px;top:313px;width:298.5px;height:39.2px;background:;background:#2d5065;box-shadow:inset 0 0 0 2px #48b1e9;border-radius:6.5px"></div>
<div class="t" style="top:243.02px;color:#fcfcfc;left:1276px;letter-spacing:-0.061px;">Line Plots</div>
<svg class="i" style="left:1534px;top:244.6px" width="12" height="20" viewBox="0 0 12 20"><path d="M2 2l8 8-8 8" fill="none" stroke="#fcfcfc" stroke-width="1.5"/></svg>
<div class="t" style="top:282.02px;color:#fcfcfc;left:1276px;letter-spacing:-0.056px;">Scatter Plots</div>
<svg class="i" style="left:1534px;top:283.6px" width="12" height="20" viewBox="0 0 12 20"><path d="M2 2l8 8-8 8" fill="none" stroke="#fcfcfc" stroke-width="1.5"/></svg>
<div class="t" style="top:321.02px;color:#fcfcfc;left:1276px;">Line and Symbol Plots</div>
<svg class="i" style="left:1534px;top:322.6px" width="12" height="20" viewBox="0 0 12 20"><path d="M2 2l8 8-8 8" fill="none" stroke="#fcfcfc" stroke-width="1.5"/></svg>
<div class="t" style="top:360.02px;color:#fcfcfc;left:1276px;">Statistical Plots</div>
<svg class="i" style="left:1534px;top:361.6px" width="12" height="20" viewBox="0 0 12 20"><path d="M2 2l8 8-8 8" fill="none" stroke="#fcfcfc" stroke-width="1.5"/></svg>
<div class="t" style="top:399.02px;color:#fcfcfc;left:1276px;">Bar Plots</div>
<svg class="i" style="left:1534px;top:400.6px" width="12" height="20" viewBox="0 0 12 20"><path d="M2 2l8 8-8 8" fill="none" stroke="#fcfcfc" stroke-width="1.5"/></svg>
<div class="t" style="top:438.02px;color:#fcfcfc;left:1276px;letter-spacing:0.295px;">Continual Improvement Plots</div>
<svg class="i" style="left:1534px;top:439.6px" width="12" height="20" viewBox="0 0 12 20"><path d="M2 2l8 8-8 8" fill="none" stroke="#fcfcfc" stroke-width="1.5"/></svg>
<div class="b" style="left:1560px;top:307px;width:239.5px;height:129.2px;background:#26292e;border-radius:7.5px;box-shadow:inset 0 0 0 1.6px #4f5358,0 3px 12px 1px rgba(0,0,0,.45)"></div>
<div class="t" style="top:321.02px;color:#fcfcfc;left:1610px;letter-spacing:-0.096px;">Line + Symbol</div>
<svg class="i" style="left:1577px;top:320px;color:#fcfcfc" width="24" height="24" viewBox="0 0 16 16"><path d="M2 14L13.4 2.6" fill="none" stroke="#c8c9ca" stroke-width="0.7" /><circle cx="2" cy="14" r="1.95" fill="currentColor"/><circle cx="7.5" cy="8.1" r="1.95" fill="currentColor"/><circle cx="13.4" cy="2.6" r="1.95" fill="currentColor"/></svg>
<div class="t" style="top:360.02px;color:#fcfcfc;left:1610px;letter-spacing:0.109px;">2 Point Segment</div>
<svg class="i" style="left:1577px;top:359px;color:#fcfcfc" width="24" height="24" viewBox="0 0 16 16"><path d="M2 10.1L4.9 2.3M9.8 10.1l3.6-7.8" fill="none" stroke="#c8c9ca" stroke-width="0.7" /><circle cx="2" cy="10.1" r="1.9" fill="currentColor"/><circle cx="4.9" cy="2.3" r="1.9" fill="currentColor"/><circle cx="9.8" cy="10.1" r="1.9" fill="currentColor"/><circle cx="13.4" cy="2.3" r="1.9" fill="currentColor"/></svg>
<div class="t" style="top:399.02px;color:#fcfcfc;left:1610px;letter-spacing:0.109px;">3 Point Segment</div>
<svg class="i" style="left:1577px;top:398px;color:#fcfcfc" width="24" height="24" viewBox="0 0 16 16"><path d="M2 14.1L7.5 2.4 13.4 14.1" fill="none" stroke="#c8c9ca" stroke-width="0.7" /><circle cx="2" cy="14.1" r="1.9" fill="currentColor"/><circle cx="7.5" cy="2.4" r="1.9" fill="currentColor"/><circle cx="13.4" cy="14.1" r="1.9" fill="currentColor"/></svg>
</div></body></html>
